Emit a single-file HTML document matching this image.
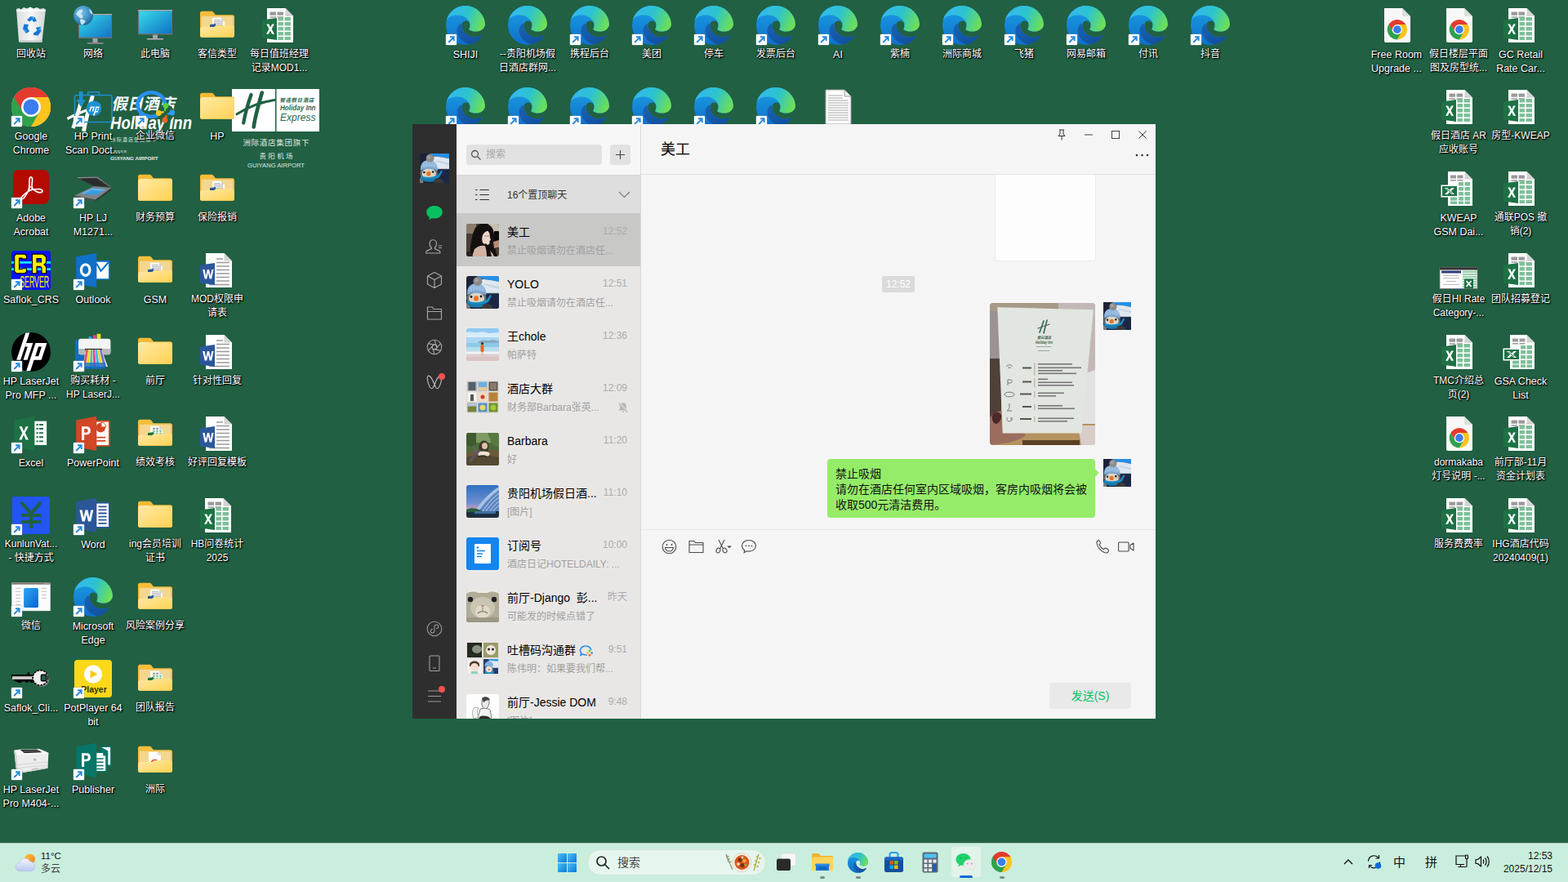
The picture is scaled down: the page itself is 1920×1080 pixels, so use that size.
<!DOCTYPE html>
<html lang="zh"><head><meta charset="utf-8"><title>Desktop</title><style>
*{box-sizing:border-box;margin:0;padding:0}
html,body{width:1920px;height:1080px;overflow:hidden}
body{background:#216043;font-family:"Liberation Sans","Noto Sans CJK SC",sans-serif;position:relative;color:#000}
.abs{position:absolute}
.di{position:absolute;width:48px;height:48px}
.di svg{position:absolute;left:0;top:0;width:48px;height:48px;overflow:visible}
.lb{position:absolute;width:110px;text-align:center;color:#fff;font-size:12px;line-height:17px;
 text-shadow:1px 1px 2px #000,0 0 2px rgba(0,0,0,.9),1px 1px 1px rgba(0,0,0,.8);white-space:nowrap}
.lb.l{font-size:12.5px;margin-top:1px}
.sc{position:absolute;left:0;top:35px;width:13px;height:13px;background:#fff;border-radius:1px;box-shadow:0 0 0 .5px rgba(160,170,180,.6)}
.sc svg{position:absolute;left:0;top:0;width:13px;height:13px}
#win{position:absolute;left:505px;top:152px;width:910px;height:728px;background:#f5f5f5;overflow:hidden}
#side{position:absolute;left:0;top:0;width:54px;height:728px;background:#2e2e2e}
#list{position:absolute;left:54px;top:0;width:226px;height:728px;background:#e9e7e6;border-right:1px solid #d9d9d9;overflow:hidden}
#chat{position:absolute;left:280px;top:0;width:630px;height:728px;background:#f5f5f5}
.it{position:absolute;left:0;width:225px;height:64px}
.it .av{position:absolute;left:12px;top:12px;width:40px;height:40px;border-radius:3px;overflow:hidden}
.it .nm{position:absolute;left:62px;top:12px;font-size:14px;line-height:20px;color:#000;white-space:nowrap}
.it .tm{position:absolute;right:16px;top:13px;font-size:12px;line-height:16px;color:#ababab;white-space:nowrap}
.it .pv{position:absolute;left:62px;top:37px;font-size:12px;line-height:16px;color:#a0a0a0;white-space:nowrap}
#tb{position:absolute;left:0;top:1032px;width:1920px;height:48px;background:#c9eedd;box-shadow:inset 0 1px 0 rgba(90,110,100,.28)}
</style></head><body>
<svg width="0" height="0" style="position:absolute">
<defs>
<linearGradient id="gFold" x1="0" y1="0" x2="1" y2="1"><stop offset="0" stop-color="#ffe9a2"/><stop offset="1" stop-color="#ffd255"/></linearGradient>
<linearGradient id="gFoldB" x1="0" y1="0" x2="0" y2="1"><stop offset="0" stop-color="#f7c64a"/><stop offset="1" stop-color="#f3d27c"/></linearGradient>
<linearGradient id="gMon" x1="0" y1="0" x2="1" y2="1"><stop offset="0" stop-color="#39dbe6"/><stop offset=".5" stop-color="#22a6d8"/><stop offset="1" stop-color="#1272c4"/></linearGradient>
<linearGradient id="gEdgeT" x1="0" y1=".3" x2="1" y2=".6"><stop offset="0" stop-color="#34b8f0"/><stop offset=".5" stop-color="#2cc3cf"/><stop offset="1" stop-color="#6fe052"/></linearGradient>
<linearGradient id="gEdgeM" x1="0" y1="0" x2="0" y2="1"><stop offset="0" stop-color="#1b9fe4"/><stop offset="1" stop-color="#0e6fca"/></linearGradient>
<linearGradient id="gEdgeD" x1="0" y1="0" x2="1" y2="1"><stop offset="0" stop-color="#1a63b4"/><stop offset="1" stop-color="#0f4c9c"/></linearGradient>
<radialGradient id="gGlobe" cx=".4" cy=".35" r=".7"><stop offset="0" stop-color="#7fc3e8"/><stop offset=".6" stop-color="#3c8fc4"/><stop offset="1" stop-color="#1f5f93"/></radialGradient>
<linearGradient id="gBin" x1="0" y1="0" x2="1" y2="0"><stop offset="0" stop-color="#d9dcdd"/><stop offset=".5" stop-color="#f6f7f7"/><stop offset="1" stop-color="#d2d6d7"/></linearGradient>
<linearGradient id="gWin" x1="0" y1="0" x2="1" y2="1"><stop offset="0" stop-color="#2ea8f5"/><stop offset="1" stop-color="#0a63c9"/></linearGradient>

<symbol id="folder" viewBox="0 0 48 48"><g transform="translate(0,0.7)">
 <path d="M3,8.5 a2.5,2.5 0 0 1 2.500,-2.500 h11.500 a3,3 0 0 1 2.200,1 l2.800,3.500 h20.500 a2.500,2.500 0 0 1 2.500,2.500 v22.500 a2.500,2.500 0 0 1 -2.500,2.500 h-37 a2.500,2.500 0 0 1 -2.500,-2.500z" fill="#f5b932"/>
 <rect x="3" y="11.500" width="42" height="26.500" rx="2.500" fill="url(#gFold)"/>
 <path d="M5,11.500 h12 v1 h-12z" fill="#fff4cf" opacity=".8"/>
</g></symbol>
<symbol id="folderopen" viewBox="0 0 48 48"><g transform="translate(0,0.7)">
 <path d="M3,8.500 a2.500,2.500 0 0 1 2.500,-2.500 h11.500 a3,3 0 0 1 2.200,1 l2.800,3.500 h20.500 a2.500,2.500 0 0 1 2.500,2.500 v22.500 a2.500,2.500 0 0 1 -2.500,2.500 h-37 a2.500,2.500 0 0 1 -2.500,-2.500z" fill="#f6bd3a"/>
 <rect x="4.800" y="12" width="38.600" height="15" rx="1" fill="#f3d791"/>
</g></symbol>
<symbol id="folderfront" viewBox="0 0 48 48"><g transform="translate(0,0.7)">
 <path d="M3,27.800 a2.500,2.500 0 0 1 2.500,-2.500 h14.500 l2.800,-1.900 h19.700 a2.500,2.500 0 0 1 2.500,2.500 v9.600 a2.500,2.500 0 0 1 -2.500,2.500 h-37 a2.500,2.500 0 0 1 -2.500,-2.500z" fill="url(#gFold)"/>
</g></symbol>
<symbol id="minidoc" viewBox="0 0 48 48"><g transform="translate(0,0.7)">
 <path d="M18,14 h11 l4,4 v10 h-15z" fill="#fff"/><path d="M29,14 l4,4 h-4z" fill="#ccc"/>
 <path d="M20,17 h8 M20,19 h11 M20,21 h11 M20,23 h11" stroke="#aaa" stroke-width="1"/>
 <path d="M15,22.500 l7,-1.200 v5.500 l-7,-1.200z" fill="#2b579a"/>
</g></symbol>
<symbol id="minixls" viewBox="0 0 48 48"><g transform="translate(0,0.7)">
 <path d="M18,14 h11 l4,4 v10 h-15z" fill="#fff"/><path d="M29,14 l4,4 h-4z" fill="#ccc"/>
 <path d="M21,16 h3 v2 h-3z M25,16 h3 v2 h-3z" fill="#999"/>
 <path d="M21,19 h3 v2 h-3z M25,19 h3 v2 h-3z M29,19 h3 v2 h-3z M21,22 h3 v2 h-3z M25,22 h3 v2 h-3z M29,22 h3 v2 h-3z" fill="#7fc29b"/>
 <path d="M15,22.500 l7,-1.200 v5.500 l-7,-1.200z" fill="#1e7145"/>
</g></symbol>
<symbol id="minipdf" viewBox="0 0 48 48"><g transform="translate(0,0.7)">
 <path d="M16,13 h11 l4,4 v12 h-15z" fill="#fff"/><path d="M27,13 l4,4 h-4z" fill="#ddd"/>
 <path d="M18.500,26 c1,-4 5,-5 8.500,-3 l-1,3z" fill="#e23a2e"/>
</g></symbol>

<symbol id="xlsfile" viewBox="0 0 48 48"><g transform="translate(0,1)">
 <path d="M9,2 h22.500 l9.500,9.500 v32.500 h-32z" fill="#fff"/>
 <path d="M31.500,2 l9.500,9.500 h-9.500z" fill="#d4d4d4"/>
 <path d="M31.500,11.500 h9.500 l-9.500,-1.500z" fill="#bbb" opacity=".5"/>
 <path d="M12.500,6.500 h7.500 v4.200 h-7.500z M21.500,6.500 h7.500 v4.200 h-7.500z" fill="#9a9a9a"/>
 <path d="M12.500,12.200 h7.500 v1.500 h-7.500z M21.500,12.200 h7.500 v1.500 h-7.500z" fill="#9a9a9a"/>
 <g fill="#7dbf99"><rect x="22.500" y="13" width="6.500" height="4.500"/><rect x="30.500" y="13" width="7.500" height="4.500"/>
 <rect x="22.500" y="19" width="6.500" height="4.500"/><rect x="30.500" y="19" width="7.500" height="4.500"/>
 <rect x="22.500" y="25" width="6.500" height="4.500"/><rect x="30.500" y="25" width="7.500" height="4.500"/>
 <rect x="22.500" y="31" width="6.500" height="4.500"/><rect x="30.500" y="31" width="7.500" height="4.500"/>
 <rect x="22.500" y="37" width="6.500" height="4"/><rect x="30.500" y="37" width="7.500" height="4"/></g>
 <path d="M3,16.500 l18,-2.500 v27 l-18,-2.500z" fill="#1e7145"/>
 <path d="M8.300,21.500 h2.900 l1.900,4 l2,-4 h2.800 l-3.300,6 l3.400,6.200 h-2.900 l-2.100,-4.200 l-2.100,4.200 h-2.800 l3.400,-6.200z" fill="#fff"/>
</g></symbol>
<symbol id="xlsold" viewBox="0 0 48 48"><g transform="translate(0,1)">
 <path d="M11,2 h20.500 l9.500,9.500 v32.500 h-30z" fill="#fff"/>
 <path d="M31.500,2 l9.500,9.500 h-9.500z" fill="#d4d4d4"/>
 <path d="M14,6.500 h7 v4 h-7z M22.500,6.500 h7 v4 h-7z" fill="#9a9a9a"/>
 <path d="M14,12 h7 v1.500 h-7z M22.500,12 h7 v1.500 h-7z" fill="#9a9a9a"/>
 <g fill="#7dbf99"><rect x="24" y="15" width="6" height="4.500"/><rect x="31.500" y="15" width="6.500" height="4.500"/>
 <rect x="24" y="21" width="6" height="4.500"/><rect x="31.500" y="21" width="6.500" height="4.500"/>
 <rect x="24" y="27" width="6" height="4.500"/><rect x="31.500" y="27" width="6.500" height="4.500"/>
 <rect x="14" y="33" width="8" height="4.500"/><rect x="24" y="33" width="6" height="4.500"/><rect x="31.500" y="33" width="6.500" height="4.500"/>
 <rect x="14" y="38.500" width="8" height="3.500"/><rect x="24" y="38.500" width="6" height="3.500"/><rect x="31.500" y="38.500" width="6.500" height="3.500"/></g>
 <rect x="2.500" y="18.500" width="21" height="15" fill="#fff"/><rect x="4" y="20" width="18" height="12" fill="#1e7145"/>
 <path d="M7,22 h3.500 l2.500,2.800 l2.500,-2.800 h3.500 l-4.200,4 l4.200,4 h-3.500 l-2.500,-2.800 l-2.500,2.800 h-3.500 l4.200,-4z" fill="#fff"/>
 <path d="M9,22.800 l7.500,6.400" stroke="#1e7145" stroke-width="1"/>
</g></symbol>
<symbol id="docfile" viewBox="0 0 48 48"><g transform="translate(0,1)">
 <path d="M10,2 h22.500 l9.500,9.500 v32.500 h-32z" fill="#fff"/>
 <path d="M32.500,2 l9.500,9.500 h-9.500z" fill="#d4d4d4"/>
 <path d="M23,9 h8 M23,13.500 h16 M23,18 h16 M23,22.500 h16 M23,27 h16 M23,31.500 h16 M23,36 h16 M14,40.500 h25" stroke="#9a9a9a" stroke-width="1.700"/>
 <path d="M3,16.500 l18,-2.500 v27 l-18,-2.500z" fill="#2b579a"/>
 <path d="M6.200,22 h2.400 l1.500,8 l1.700,-8 h2.300 l1.700,8 l1.500,-8 h2.300 l-2.500,11.500 h-2.500 l-1.700,-7.800 l-1.700,7.800 h-2.500z" fill="#fff"/>
</g></symbol>
<symbol id="txtfile" viewBox="0 0 48 48">
 <path d="M9,3 h23 l8,8 v34 h-31z" fill="#fff" stroke="#9a9a9a" stroke-width="1"/>
 <path d="M32,3 v8 h8" fill="#eee" stroke="#9a9a9a" stroke-width="1"/>
 <path d="M12,10 h18 M12,13 h18 M12,16 h25 M12,19 h25 M12,22 h25 M12,25 h25 M12,28 h25 M12,31 h25 M12,34 h25 M12,37 h25 M12,40 h25" stroke="#a8a8a8" stroke-width="1.200"/>
</symbol>
<symbol id="chrome" viewBox="0 0 48 48">
 <circle cx="24" cy="24" r="24" fill="#fff"/>
 <path d="M24,24 L3.220,12 A24,24 0 0 1 44.780,12z" fill="#e33b2e"/>
 <path d="M24,24 L44.780,12 A24,24 0 0 1 24,48z" fill="#fcc31e"/>
 <path d="M24,24 L24,48 A24,24 0 0 1 3.220,12z" fill="#2ea24c"/>
 <path d="M24,12 h20.780 A24,24 0 0 0 3.220,12 L13.600,30z" fill="#e33b2e"/>
 <path d="M34.400,30 L24,48 A24,24 0 0 0 44.780,12 H24z" fill="#fcc31e"/>
 <path d="M13.600,30 L3.220,12 A24,24 0 0 0 24,48 L34.400,30z" fill="#2ea24c"/>
 <circle cx="24" cy="24" r="12" fill="#fff"/><circle cx="24" cy="24" r="9.500" fill="#3b7ded"/>
</symbol>
<symbol id="chromefile" viewBox="0 0 48 48"><g transform="translate(0,1)">
 <path d="M9,2 h22 l10,10 v30 a2,2 0 0 1 -2,2 h-28 a2,2 0 0 1 -2,-2z" fill="#f7f7f7"/>
 <path d="M31,2 l10,10 h-8 a2,2 0 0 1 -2,-2z" fill="#dedede"/>
 <g transform="translate(12.700,16) scale(.508)">
 <circle cx="24" cy="24" r="24" fill="#fff"/>
 <path d="M24,12 h20.780 A24,24 0 0 0 3.220,12 L13.600,30z" fill="#e33b2e"/>
 <path d="M34.400,30 L24,48 A24,24 0 0 0 44.780,12 H24z" fill="#fcc31e"/>
 <path d="M13.600,30 L3.220,12 A24,24 0 0 0 24,48 L34.400,30z" fill="#2ea24c"/>
 <circle cx="24" cy="24" r="12" fill="#fff"/><circle cx="24" cy="24" r="9.500" fill="#3b7ded"/></g>
</g></symbol>
<symbol id="edge" viewBox="0 0 48 48">
 <path d="M24,0 A24,24 0 1 0 24,48 C32,48 40,44 44.600,36.100 C40,39 34,39.500 29.800,37.500 C25,35.500 20.500,31.500 19.500,25.500 C19,21.500 21.300,18.800 24,18.500 C27.500,18.200 29.800,21 29.600,24.300 C29.500,26.300 28.900,27.800 28.200,29 C31,31 34.400,31.800 38,31.500 C43,31 47.500,28 48,23 A24,24 0 0 0 24,0Z" fill="url(#gEdgeM)"/>
 <path d="M0.600,18 C3,13 9,11 15.900,11.600 C21,12 26,15 28.900,19.900 C29.900,22 29.800,26.300 28.200,29 C31,31 34.400,31.800 38,31.500 C43,31 47.500,28 48,23 A24,24 0 0 0 24,0 A24,24 0 0 0 0.600,18Z" fill="url(#gEdgeT)"/>
 <path d="M18.300,21.600 C15,24 13,28 13.600,31.900 C14.500,38 19,44 28.900,47.200 C36,46.500 41.500,42 44.600,36.100 C40,39 34,39.500 29.800,37.500 C25,35.500 20.500,31.500 19.500,25.500 C19.300,24 19,22.500 18.300,21.600Z" fill="url(#gEdgeD)"/>
</symbol>
<symbol id="arrow" viewBox="0 0 13 13">
 <path d="M3.200,10 L9.300,3.900 M5,3.300 h4.700 v4.700" fill="none" stroke="#2689dc" stroke-width="1.900"/>
</symbol>
<symbol id="recycle" viewBox="0 0 48 48"><g transform="translate(0,0.5)">
 <path d="M6,3.500 l3,-1 l3,1.500 l3,-2.500 l4,1.500 l4,-2 l4,2 l4,-1.500 l4,2 l4,-1 l3,1.500 l-4.500,39 a1.500,1.500 0 0 1 -1.500,1.300 h-25.500 a1.500,1.500 0 0 1 -1.500,-1.300z" fill="url(#gBin)"/>
 <path d="M6,4.500 h36 l-.3,2 h-35.400z" fill="#fff" opacity=".8"/>
 <path d="M10,42 h28 l-.3,2 h-27.400z" fill="#c4c8c9"/>
 <g fill="#1577d4"><path d="M19,17 l4.500,-4.500 l5,1 l2.500,4.500 l-4,1.500 l-2,-3 l-2.500,2.500z"/>
 <path d="M15.500,22 l5.500,.5 l-1.500,4 l2.500,4.500 l-4,2.500 l-4,-5.500z"/>
 <path d="M27,33 l4.500,-3 l-1.500,-3.500 l5.500,-1.500 l1,5.500 l-4,5.500 l-5.500,-.5z"/></g>
 <g fill="#4aa3ef"><path d="M23.500,12.500 l5,1 l-2,3z"/><path d="M14,28 l4,5.500 l.5,-4z"/><path d="M35.500,25 l1,5.500 l-3.500,-1.500z"/></g>
</g></symbol>
<symbol id="pc" viewBox="0 0 48 48"><g transform="translate(0,1)">
 <rect x="3" y="4" width="42" height="30.500" fill="#6b7075"/>
 <rect x="3" y="4" width="42" height="1.500" fill="#a9adb1"/>
 <rect x="4" y="5.500" width="40" height="27.500" fill="url(#gMon)"/>
 <rect x="21" y="34.500" width="6" height="4.500" fill="#9fa4a8"/>
 <rect x="14" y="39" width="20" height="2" fill="#7f8489"/><rect x="14" y="39" width="20" height=".8" fill="#b8bcc0"/>
</g></symbol>
<symbol id="net" viewBox="0 0 48 48"><g transform="translate(0,1)">
 <rect x="6" y="9" width="41" height="30" fill="#6b7075"/>
 <rect x="6" y="9" width="41" height="1.500" fill="#a9adb1"/>
 <rect x="7" y="10.500" width="39" height="27" fill="url(#gMon)"/>
 <rect x="23.500" y="39" width="6" height="5" fill="#9fa4a8"/>
 <rect x="17" y="44" width="19.500" height="2" fill="#7f8489"/>
 <circle cx="12" cy="11" r="12" fill="url(#gGlobe)"/>
 <path d="M3,9 c2,-4 5,-6 8,-5 c1,2 -1,3 -2,5 c2,1 3,3 2,5 c-2,1 -4,0 -5,-2 c-1,-1 -2,-1 -3,-3z M19,3 c2,1 4,3 4.500,6 c-1,1 -2.500,0 -3,-1.500 c-.5,-2 -1.500,-3 -1.500,-4.500z M8,16 c2,-1 5,0 7,2 c-1,2 -3,3 -4,5 c-2,-1 -3,-4 -3,-7z" fill="#d7ecf6" opacity=".9"/>
</g></symbol>
<symbol id="acrobat" viewBox="0 0 48 48">
 <rect x="2.100" y="0.900" width="43.800" height="42.100" rx="6.500" fill="#b30b00"/>
 <g fill="none" stroke="#fff" stroke-width="1.700" stroke-linecap="round" stroke-linejoin="round">
 <path d="M21.500,24 C22.500,18 21.500,13 22.500,10.800 C23.800,8.600 26,10.200 25.600,14 C25.200,18 24,21 26,25"/>
 <path d="M24,22 C28,26.500 33,29.200 36,28.700 C39,28.200 38.500,25.200 35,24.700 C31,24.200 26,24.700 21,26.200"/>
 <path d="M26,24.700 C20,27.200 15,31 12.500,34.500 C11,36.700 13.500,37.700 15.500,35.200 C18,32 21,27 22.500,21.500"/></g>
</symbol>
<symbol id="scanner" viewBox="0 0 48 48">
 <path d="M3.600,10.100 L29.100,9.500 L46.700,22.500 L24.500,21z" fill="#3b3d3f"/>
 <path d="M3.600,10.100 L29.100,9.500 L46.700,22.500 L45.500,22.300 L28.600,10.700 L6.500,11.200z" fill="#85898c"/>
 <path d="M8,12 L28,11.500 L42,21.300 L24,20z" fill="#2a2b2d"/>
 <path d="M1.300,32.400 L24.500,21.300 L46.700,23.100 L26.800,37.400z" fill="#808487"/>
 <path d="M1.300,32.400 L26.800,37.400 L26.800,39.800 L1.800,34.200z" fill="#4b4e50"/>
 <path d="M26.800,37.400 L46.700,23.100 L46.700,25.400 L26.800,39.800z" fill="#37393b"/>
 <path d="M9.200,30 L23.100,23.600 L39.300,24.900 L28.200,31.900z" fill="#3b9be0"/>
 <path d="M9.200,30 L23.100,23.600 L39.300,24.900 L36,27 L22,25.700 L12.500,30.500z" fill="#63b6ee"/>
</symbol>
<symbol id="crs" viewBox="0 0 48 48">
 <rect x="0" y="0" width="48.200" height="48" rx="4" fill="#0a14f0"/>
 <path d="M0,12.900 h48.200 v2.800 h-48.200z M0,21.200 h48.200 v2.800 h-48.200z" fill="#10e8f8"/>
 <g fill="#ffee00" stroke="#000" stroke-width="1.100" stroke-linejoin="miter">
 <path d="M6,4.100 h10.500 l2,2 v4 h-5.500 v-1 h-3.500 v13.600 h3.500 v-1 h5.500 v4 l-2,2 h-10.500 l-2.300,-2.300 v-19z"/>
 <path d="M25.500,4.100 h13 l4,3.500 v7 l-2.500,2.500 l2.600,2.600 v8 h-5.600 v-7 l-1.500,-1.500 h-4.500 v8.500 h-5.500z M31,9.500 h5.500 v4.500 h-5.500z" fill-rule="evenodd"/></g>
 <text x="10.200" y="44.700" font-family="Liberation Sans,sans-serif" font-size="19.500" fill="#ffee00" textLength="36" lengthAdjust="spacingAndGlyphs">SERVER</text>
</symbol>
<symbol id="outlook" viewBox="0 0 48 48">
 <rect x="26" y="12" width="18.800" height="23.600" rx="1.500" fill="#0f70c8"/>
 <path d="M28.200,13.800 h14.800 v20.400 h-14.800z" fill="#fff"/>
 <path d="M28.200,15.500 l5.300,9.300 l9.500,-10.800" stroke="#0f70c8" stroke-width="2" fill="none"/>
 <path d="M3.200,7.400 L28.200,2.700 L28.200,44.900 L3.200,40.200z" fill="#0f70c8"/>
 <ellipse cx="14.700" cy="23.600" rx="5.300" ry="6.700" fill="none" stroke="#fff" stroke-width="3.200"/>
</symbol>
<symbol id="hpblack" viewBox="0 0 48 48">
 <circle cx="24" cy="24" r="24" fill="#000"/>
 <path d="M17.300,0.800 L22.300,0.300 L11.200,33.800 L6.200,33.800z" fill="#fff"/>
 <path d="M18.200,13 L26.400,13 L19.500,33.800 L14.500,33.800 L19.800,17.600 L16.700,17.600z" fill="#fff"/>
 <path d="M29.500,13 L43.500,13 L36.600,33.800 L27.600,33.800 L23.200,47.200 L18.200,47.200z M33,17.600 L37,17.600 L33.200,29.200 L29.200,29.200z" fill="#fff" fill-rule="evenodd"/>
</symbol>
<symbol id="printerc" viewBox="0 0 48 48">
 <rect x="1.800" y="9.200" width="35.600" height="35.200" rx="3" fill="#1469c7"/>
 <path d="M18.500,5 h3.700 v3 h-3.700z" fill="#2f9be8"/><path d="M24,3.200 h3.700 v5 h-3.700z" fill="#e23fa0"/><path d="M28.600,1.800 h4.700 v6 h-4.700z" fill="#f0de2a"/>
 <path d="M6,11 a3.200,3.200 0 0 1 3.200,-3.200 h33 a3.200,3.200 0 0 1 3.200,3.200 v13.300 a3,3 0 0 1 -3,3 h-33.400 a3,3 0 0 1 -3,-3z" fill="#f3f4f4"/>
 <path d="M6,19.900 h39.400 v4.400 a3,3 0 0 1 -3,3 h-33.400 a3,3 0 0 1 -3,-3z" fill="#b4b8bb"/>
 <path d="M14,19.900 h21 v3 h-21z" fill="#2a2c2e"/>
 <path d="M14.800,21 h19.400 l7.800,21 h-30.500z" fill="#e9e9ef"/>
 <path d="M15.500,21 l-4,21 h3.300 l3.200,-21z" fill="#e8505a"/><path d="M18.300,21 l-2.500,21 h3.300 l1.500,-21z" fill="#f2d530"/><path d="M21,21 l-1,21 h3.300 l0,-21z" fill="#5ac27a"/>
 <path d="M23.800,21 l.5,21 h3.300 l-1.500,-21z" fill="#e6469b"/><path d="M26.500,21 l2,21 h3.300 l-3,-21z" fill="#3cb4e6"/><path d="M29,21 l3.500,21 h3.300 l-4.500,-21z" fill="#f2d530"/>
 <path d="M31.800,21 l5,21 h3.300 l-6,-21z" fill="#7a6fc8"/>
 <path d="M10,37 h29 v7.400 h-29z" fill="#1469c7" opacity=".75"/>
</symbol>
<symbol id="excel" viewBox="0 0 48 48">
 <rect x="27" y="7.800" width="17.200" height="31" fill="#1e7145"/>
 <rect x="28.200" y="8.700" width="14.900" height="29.200" fill="#fff"/>
 <path d="M30.500,12 h8.500 v1.900 h-8.500z M30.500,17.100 h8.500 v1.900 h-8.500z M30.500,22.200 h8.500 v1.900 h-8.500z M30.500,27.300 h8.500 v1.900 h-8.500z M30.500,32.400 h8.500 v1.900 h-8.500z" fill="#1e7145"/>
 <rect x="32.800" y="11" width="1.100" height="24.500" fill="#fff"/>
 <path d="M3.200,7.400 L28.200,2.700 L28.200,44.900 L3.200,40.200z" fill="#1e7145"/>
 <g transform="translate(9.300,15.200) scale(.8,.875) translate(-8.200,-15)"><path d="M8.500,15 h4 l3,6.500 l3.200,-6.500 h3.800 l-5,9 l5.200,9.500 h-4 l-3.300,-6.800 l-3.300,6.800 h-3.900 l5.100,-9.400z" fill="#fff"/></g>
</symbol>
<symbol id="ppt" viewBox="0 0 48 48">
 <rect x="27" y="7.800" width="17.800" height="32" rx="1.500" fill="#d24726"/>
 <path d="M28.200,9.600 h14.800 v28.400 h-14.800z" fill="#fff"/>
 <circle cx="33.300" cy="16.600" r="5.800" fill="#d24726"/>
 <path d="M34,15.900 v-5.800 a5.800,5.800 0 0 1 5.800,5.800z" fill="#fff" stroke="#d24726" stroke-width=".9"/>
 <path d="M28.200,27.700 h11.100 v1.800 h-11.100z M28.200,31.900 h11.100 v1.800 h-11.100z" fill="#d24726"/>
 <path d="M3.200,7.400 L28.200,2.700 L28.200,44.900 L3.200,40.200z" fill="#d24726"/>
 <g transform="translate(10.100,15.200) scale(.8,.86) translate(-10,-14)"><path d="M10,14 h7.500 c4,0 6,2.300 6,5.800 c0,3.700 -2.500,6 -6.500,6 h-3.200 v7.700 h-3.800z M13.800,17.200 v5.500 h2.800 c2,0 3,-1 3,-2.800 c0,-1.800 -1,-2.700 -3,-2.700z" fill="#fff" fill-rule="evenodd"/></g>
</symbol>
<symbol id="word" viewBox="0 0 48 48">
 <rect x="27" y="7.800" width="17.800" height="32" rx="1.500" fill="#2b579a"/>
 <path d="M28.200,9.600 h14.800 v28.400 h-14.800z" fill="#fff"/>
 <path d="M30.500,13.300 h10 M30.500,17.400 h10 M30.500,21.500 h10 M30.500,25.600 h10 M30.500,29.700 h10 M30.500,33.800 h10" stroke="#2b579a" stroke-width="1.800"/>
 <path d="M3.200,7.400 L28.200,2.700 L28.200,44.900 L3.200,40.200z" fill="#2b579a"/>
 <g transform="translate(7.500,17.500) scale(.91,.78) translate(-7,-15)"><path d="M7,15 h3.400 l2,12 l2.300,-12 h3.200 l2.300,12 l2,-12 h3.300 l-3.500,18 h-3.500 l-2.200,-11.500 l-2.300,11.500 h-3.500z" fill="#fff"/></g>
</symbol>
<symbol id="pub" viewBox="0 0 48 48">
 <rect x="32.800" y="6.400" width="13.900" height="24.600" rx="1.200" fill="#077568"/>
 <path d="M34.300,8 h10.800 v21.500 h-2.800 v-17z" fill="#fff"/>
 <rect x="27" y="13.400" width="14.600" height="25" rx="1.200" fill="#077568"/>
 <path d="M28.200,15 h8 v3.500 h3 v18.500 h-11z" fill="#fff"/>
 <path d="M28.200,22 h8.500 M28.200,26.200 h8.500 M28.200,30.400 h8.500 M28.200,34.600 h8.500" stroke="#077568" stroke-width="1.500"/>
 <path d="M3.200,7.400 L28.200,2.700 L28.200,44.900 L3.200,40.200z" fill="#077568"/>
 <g transform="translate(10.100,15.200) scale(.8,.86) translate(-10,-14)"><path d="M10,14 h7.500 c4,0 6,2.300 6,5.800 c0,3.700 -2.500,6 -6.500,6 h-3.200 v7.700 h-3.800z M13.800,17.200 v5.500 h2.800 c2,0 3,-1 3,-2.800 c0,-1.800 -1,-2.700 -3,-2.700z" fill="#fff" fill-rule="evenodd"/></g>
</symbol>
<symbol id="kunlun" viewBox="0 0 48 48"><g transform="translate(0,1)">
 <rect x="1" y="0" width="46" height="46" rx="3" fill="#2255f2"/>
 <path d="M12,7 l12,14 l12,-14 M12,23 h24 M12,31 h24 M24,21 v18" fill="none" stroke="#216043" stroke-width="4.200"/>
</g></symbol>
<symbol id="wxwin" viewBox="0 0 48 48">
 <rect x="0.300" y="6.200" width="47.400" height="34.900" rx=".8" fill="#fbfbfb"/>
 <rect x="0.300" y="6.200" width="47.400" height="2.500" fill="#7d7875"/>
 <path d="M0.600,8.700 v32.100 h46.800 v-32.100" fill="none" stroke="#cfcfcf" stroke-width=".6"/>
 <circle cx="41" cy="7.400" r=".5" fill="#ddd"/><circle cx="43" cy="7.400" r=".5" fill="#ddd"/><circle cx="45" cy="7.400" r=".5" fill="#ddd"/>
 <rect x="15.100" y="12.900" width="17.800" height="24.100" rx="1.600" fill="url(#gWin)"/>
 <path d="M5.100,13.400 h6 M5.100,17.500 h6 M5.100,21.500 h6 M5.100,25.400 h6 M5.100,29.400 h6 M5.100,33.500 h6 M37,13.400 h5.900 M37,17.500 h5.900 M37,21.500 h5.900 M37,25.400 h5.900" stroke="#b4b4b4" stroke-width=".8"/>
</symbol>
<symbol id="key" viewBox="0 0 48 48">
 <circle cx="36.600" cy="24.200" r="9.800" fill="#8c8c8c"/>
 <path d="M0.100,19.100 h19.500 v-2.800 h2.500 v2.800 h5.200 v10 h-4 v-1.500 h-3 v1.500 h-3 v-1.500 h-5 v1.500 h-4 l-1.500,-1.500 h-2 l-4.800,-4.500z" fill="#000"/>
 <rect x="1" y="21.300" width="27" height="3.600" fill="#cdcdcd"/>
 <path d="M1.500,21.700 h25" stroke="#fff" stroke-width=".7" stroke-dasharray="1 1"/>
 <circle cx="35.400" cy="23" r="9.200" fill="#ececec" stroke="#000" stroke-width="1.700" stroke-dasharray="2.600 1.300"/>
 <circle cx="35.400" cy="23" r="8.300" fill="#efefef"/>
 <rect x="36.400" y="19.300" width="6.300" height="7.400" rx="1.200" fill="#216043" stroke="#000" stroke-width="1.400"/>
</symbol>
<symbol id="pot" viewBox="0 0 48 48"><g transform="translate(0,1)">
 <rect x="1" y="0" width="46" height="46" rx="4" fill="#fbd81a"/>
 <circle cx="24" cy="17.500" r="11" fill="#fff"/><path d="M20.500,12.500 l9,5 l-9,5z" fill="#fbc91a"/>
 <text x="25" y="40" font-family="Liberation Sans,sans-serif" font-weight="bold" font-size="10.500" fill="#3a3000" text-anchor="middle">Player</text>
</g></symbol>
<symbol id="laser" viewBox="0 0 48 48">
 <path d="M3.300,11.800 L10.500,10.500 L33.800,10.100 L45.400,15 L44.500,33.800 L14.800,39 L7.900,37.400 L5.500,33z" fill="#ededed"/>
 <path d="M3.500,11.700 L33.800,10.100 L45.400,14.800 L6,15.700z" fill="#f8f8f8"/>
 <path d="M10.700,11 L31,10.500 L37.500,14.200 L15.800,15.300z" fill="#2b2b2d"/>
 <path d="M13,12.300 L32.500,11.700 L34.500,13 L14.800,13.800z" fill="#55575a"/>
 <path d="M3.300,11.800 L6,15.700 L7.900,37.400 L5.500,33z" fill="#cfd1d2"/>
 <path d="M6,15.700 L45.400,14.800 L45.300,16 L6.100,17z" fill="#fdfdfd"/>
 <path d="M7.200,29.500 L44.800,26 M7.600,33.500 L44.600,30" stroke="#c9cbcc" stroke-width=".7" fill="none"/>
 <path d="M7.900,37.400 L14.800,39 L44.500,33.800 L44.600,32 L14.800,37.200 L7.800,35.600z" fill="#d4d6d7"/>
 <circle cx="28.700" cy="23.100" r="1.700" fill="#b5b7b9"/>
 <path d="M25,35 l8,-1.300" stroke="#bfc1c2" stroke-width="1.200"/>
</symbol>
<symbol id="hpscan" viewBox="0 0 48 48"><g transform="translate(0,1)">
 <path d="M17.700,8.500 v-3.800 h13.700 v3.800" fill="none" stroke="#1d8fd1" stroke-width="1.500"/>
 <rect x="1.500" y="8.500" width="45.500" height="33" rx="2.500" fill="none" stroke="#1d8fd1" stroke-width="1.500"/>
 <path d="M7,4 h4.500 v10 h3.500 l-5.800,9 l-5.800,-9 h3.600z" fill="#1d8fd1"/>
 <circle cx="25" cy="24.700" r="9.300" fill="#1d8fd1"/>
 <path d="M22.500,17.500 l-3.500,11 h1.600 l1.500,-4.500 h2 l-1.500,4.500 h1.600 l2,-6 h-5.200 l1.600,-5z M27.500,22.500 l-3.500,11 h1.600 l1.300,-4 h2.700 l2.200,-7z M28.700,24 h1.700 l-1.200,4 h-1.700z" fill="#fff" fill-rule="evenodd"/>
</g></symbol>
<symbol id="wecom" viewBox="0 0 48 48"><g transform="translate(0,1)">
 <ellipse cx="19.300" cy="20" rx="16.800" ry="14.800" fill="none" stroke="#2a8ff0" stroke-width="4.600"/>
 <path d="M5,28 l-1.500,7.500 l7,-3z" fill="#2a8ff0"/>
 <circle cx="36.900" cy="30.300" r="10.500" fill="#216043"/>
 <g stroke-linecap="round" stroke-width="2.600" fill="none">
 <path d="M36.900,22 L36,27" stroke="#5cd032"/><path d="M44.700,30.300 L40,31.500" stroke="#2f9cf3"/><path d="M36,38.600 L37.500,34" stroke="#f3661f"/><path d="M28.500,30.300 L33.500,29.300" stroke="#f8c51c"/></g>
 <circle cx="37" cy="21.500" r="3.400" fill="#5cd032"/><circle cx="44.800" cy="30" r="3.400" fill="#2f9cf3"/><circle cx="35.900" cy="39" r="3.400" fill="#f3661f"/><circle cx="28.300" cy="30.500" r="3.400" fill="#f8c51c"/>
</g></symbol>
<symbol id="thumb" viewBox="0 0 48 48">
 <g transform="translate(0,9.500)"><rect x="1" y="11" width="46" height="26" fill="#fff" stroke="#777" stroke-width=".8"/>
 <rect x="1" y="11" width="46" height="3" fill="#333"/>
 <rect x="3" y="15" width="24" height="3" fill="#2b3a7a"/>
 <path d="M5,21 h20 M5,24 h20 M9,28 h12 M5,32 h20" stroke="#bbb" stroke-width="1"/>
 <rect x="29" y="15" width="17" height="21" fill="#9fd0b3"/>
 <path d="M29,18 h17 M29,21 h17 M29,24 h17 M29,27 h17 M29,30 h17 M29,33 h17" stroke="#fff" stroke-width=".8"/>
 <rect x="31" y="25" width="11" height="12" fill="#1e7145"/>
 <path d="M33.500,27.500 l6,7 M39.500,27.500 l-6,7" stroke="#fff" stroke-width="1.800"/></g>
</symbol>
</defs></svg>

<svg class="abs" style="left:80px;top:108px" width="160" height="92" viewBox="0 0 160 92">
<g fill="none" stroke="#fff" stroke-linecap="butt">
<path d="M19.500,15 C17,26 13,38 9.500,49" stroke-width="4.600"/><path d="M2.500,37.500 C12,32 28,26 43,20.500" stroke-width="3.200"/>
<path d="M33.500,9 C29,24 25,38 22.500,53" stroke-width="4.800"/></g>
<text transform="translate(56.20,25.80) skewX(-12)" x="0.400" y="0" font-family="Liberation Sans,Noto Sans CJK SC,sans-serif" font-weight="bold" font-size="19.200" fill="#fff" textLength="78" lengthAdjust="spacingAndGlyphs">假日酒店</text>
<text x="55" y="49.700" font-family="Liberation Sans,sans-serif" font-style="italic" font-weight="bold" font-size="22.600" fill="#fff" textLength="100" lengthAdjust="spacingAndGlyphs">Holiday Inn</text>
<text x="55.500" y="65" font-family="Liberation Sans,Noto Sans CJK SC,sans-serif" font-size="6" fill="#d5e2db" textLength="56.200" lengthAdjust="spacing">洲际酒店集团旗下</text>
<text x="59.200" y="79.300" font-family="Liberation Sans,Noto Sans CJK SC,sans-serif" font-size="3.600" fill="#d5e2db" textLength="15.600" lengthAdjust="spacing">贵阳机场</text>
<text x="55.300" y="87.700" font-family="Liberation Sans,sans-serif" font-weight="bold" font-size="5.800" fill="#e6eee9" textLength="58.300" lengthAdjust="spacingAndGlyphs">GUIYANG AIRPORT</text>
</svg><svg class="abs" style="left:284px;top:108px" width="108" height="100" viewBox="0 0 108 100">
<rect x="0" y="1" width="53" height="52" fill="#fff"/><rect x="54.500" y="1" width="52.500" height="52" fill="#fff"/>
<g fill="none" stroke="#216043" stroke-linecap="round"><path d="M23.500,8 C20,18 16,32 14.200,42.500" stroke-width="4.300"/>
<path d="M6,31.800 C18,24 34,17.200 52,14.500" stroke-width="3"/><path d="M36.800,5.500 C32,22 28,36 26.700,47.500" stroke-width="4.600"/></g>
<text transform="translate(58.20,16.80) skewX(-12)" x="0.200" y="0" font-family="Liberation Sans,Noto Sans CJK SC,sans-serif" font-weight="bold" font-size="6.500" fill="#2b6a4c" textLength="41.800" lengthAdjust="spacing">智选假日酒店</text>
<text x="59" y="26.700" font-family="Liberation Sans,sans-serif" font-style="italic" font-weight="bold" font-size="8.700" fill="#2b6a4c" textLength="43.500" lengthAdjust="spacingAndGlyphs">Holiday Inn</text>
<text x="59" y="40.200" font-family="Liberation Sans,sans-serif" font-style="italic" font-size="13" fill="#2b6a4c" textLength="43.500" lengthAdjust="spacingAndGlyphs">Express</text>
<text x="13.400" y="70" font-family="Liberation Sans,Noto Sans CJK SC,sans-serif" font-size="9.500" fill="#dce8e1" textLength="81" lengthAdjust="spacing">洲际酒店集团旗下</text>
<text x="33.500" y="86" font-family="Liberation Sans,Noto Sans CJK SC,sans-serif" font-size="8.500" fill="#dce8e1" textLength="41" lengthAdjust="spacing">贵阳机场</text>
<text x="54" y="96.500" font-family="Liberation Sans,sans-serif" font-size="7.500" fill="#dce8e1" text-anchor="middle" textLength="70" lengthAdjust="spacingAndGlyphs">GUIYANG AIRPORT</text>
</svg>
<div class="di" style="left:14px;top:7px"><svg viewBox="0 0 48 48"><use href="#recycle"/></svg></div><div class="lb" style="left:-17px;top:58px">回收站</div>
<div class="di" style="left:90px;top:7px"><svg viewBox="0 0 48 48"><use href="#net"/></svg></div><div class="lb" style="left:59px;top:58px">网络</div>
<div class="di" style="left:166px;top:7px"><svg viewBox="0 0 48 48"><use href="#pc"/></svg></div><div class="lb" style="left:135px;top:58px">此电脑</div>
<div class="di" style="left:242px;top:7px"><svg viewBox="0 0 48 48"><use href="#folderopen"/><use href="#minidoc"/><use href="#folderfront"/></svg></div><div class="lb" style="left:211px;top:58px">客信类型</div>
<div class="di" style="left:318px;top:7px"><svg viewBox="0 0 48 48"><use href="#xlsfile"/></svg></div><div class="lb" style="left:287px;top:58px">每日值班经理<br>记录MOD1...</div>
<div class="di" style="left:14px;top:107px"><svg viewBox="0 0 48 48"><use href="#chrome"/></svg><div class="sc"><svg viewBox="0 0 13 13"><use href="#arrow"/></svg></div></div><div class="lb l" style="left:-17px;top:158px">Google<br>Chrome</div>
<div class="di" style="left:90px;top:107px"><svg viewBox="0 0 48 48"><use href="#hpscan"/></svg><div class="sc"><svg viewBox="0 0 13 13"><use href="#arrow"/></svg></div></div><div class="lb l" style="left:59px;top:158px">HP Print<br>Scan Doct...</div>
<div class="di" style="left:166px;top:107px"><svg viewBox="0 0 48 48"><use href="#wecom"/></svg><div class="sc"><svg viewBox="0 0 13 13"><use href="#arrow"/></svg></div></div><div class="lb" style="left:135px;top:158px">企业微信</div>
<div class="di" style="left:242px;top:107px"><svg viewBox="0 0 48 48"><use href="#folder"/></svg></div><div class="lb l" style="left:211px;top:158px">HP</div>
<div class="di" style="left:14px;top:207px"><svg viewBox="0 0 48 48"><use href="#acrobat"/></svg><div class="sc"><svg viewBox="0 0 13 13"><use href="#arrow"/></svg></div></div><div class="lb l" style="left:-17px;top:258px">Adobe<br>Acrobat</div>
<div class="di" style="left:90px;top:207px"><svg viewBox="0 0 48 48"><use href="#scanner"/></svg><div class="sc"><svg viewBox="0 0 13 13"><use href="#arrow"/></svg></div></div><div class="lb l" style="left:59px;top:258px">HP LJ<br>M1271...</div>
<div class="di" style="left:166px;top:207px"><svg viewBox="0 0 48 48"><use href="#folder"/></svg></div><div class="lb" style="left:135px;top:258px">财务预算</div>
<div class="di" style="left:242px;top:207px"><svg viewBox="0 0 48 48"><use href="#folderopen"/><use href="#minidoc"/><use href="#folderfront"/></svg></div><div class="lb" style="left:211px;top:258px">保险报销</div>
<div class="di" style="left:14px;top:307px"><svg viewBox="0 0 48 48"><use href="#crs"/></svg><div class="sc"><svg viewBox="0 0 13 13"><use href="#arrow"/></svg></div></div><div class="lb l" style="left:-17px;top:358px">Saflok_CRS</div>
<div class="di" style="left:90px;top:307px"><svg viewBox="0 0 48 48"><use href="#outlook"/></svg><div class="sc"><svg viewBox="0 0 13 13"><use href="#arrow"/></svg></div></div><div class="lb l" style="left:59px;top:358px">Outlook</div>
<div class="di" style="left:166px;top:307px"><svg viewBox="0 0 48 48"><use href="#folderopen"/><use href="#minidoc"/><use href="#folderfront"/></svg></div><div class="lb l" style="left:135px;top:358px">GSM</div>
<div class="di" style="left:242px;top:307px"><svg viewBox="0 0 48 48"><use href="#docfile"/></svg></div><div class="lb" style="left:211px;top:358px">MOD权限申<br>请表</div>
<div class="di" style="left:14px;top:407px"><svg viewBox="0 0 48 48"><use href="#hpblack"/></svg><div class="sc"><svg viewBox="0 0 13 13"><use href="#arrow"/></svg></div></div><div class="lb l" style="left:-17px;top:458px">HP LaserJet<br>Pro MFP ...</div>
<div class="di" style="left:90px;top:407px"><svg viewBox="0 0 48 48"><use href="#printerc"/></svg><div class="sc"><svg viewBox="0 0 13 13"><use href="#arrow"/></svg></div></div><div class="lb" style="left:59px;top:458px">购买耗材 -<br>HP LaserJ...</div>
<div class="di" style="left:166px;top:407px"><svg viewBox="0 0 48 48"><use href="#folder"/></svg></div><div class="lb" style="left:135px;top:458px">前厅</div>
<div class="di" style="left:242px;top:407px"><svg viewBox="0 0 48 48"><use href="#docfile"/></svg></div><div class="lb" style="left:211px;top:458px">针对性回复</div>
<div class="di" style="left:14px;top:507px"><svg viewBox="0 0 48 48"><use href="#excel"/></svg><div class="sc"><svg viewBox="0 0 13 13"><use href="#arrow"/></svg></div></div><div class="lb l" style="left:-17px;top:558px">Excel</div>
<div class="di" style="left:90px;top:507px"><svg viewBox="0 0 48 48"><use href="#ppt"/></svg><div class="sc"><svg viewBox="0 0 13 13"><use href="#arrow"/></svg></div></div><div class="lb l" style="left:59px;top:558px">PowerPoint</div>
<div class="di" style="left:166px;top:507px"><svg viewBox="0 0 48 48"><use href="#folderopen"/><use href="#minixls"/><use href="#folderfront"/></svg></div><div class="lb" style="left:135px;top:558px">绩效考核</div>
<div class="di" style="left:242px;top:507px"><svg viewBox="0 0 48 48"><use href="#docfile"/></svg></div><div class="lb" style="left:211px;top:558px">好评回复模板</div>
<div class="di" style="left:14px;top:607px"><svg viewBox="0 0 48 48"><use href="#kunlun"/></svg><div class="sc"><svg viewBox="0 0 13 13"><use href="#arrow"/></svg></div></div><div class="lb" style="left:-17px;top:658px">KunlunVat...<br>- 快捷方式</div>
<div class="di" style="left:90px;top:607px"><svg viewBox="0 0 48 48"><use href="#word"/></svg><div class="sc"><svg viewBox="0 0 13 13"><use href="#arrow"/></svg></div></div><div class="lb l" style="left:59px;top:658px">Word</div>
<div class="di" style="left:166px;top:607px"><svg viewBox="0 0 48 48"><use href="#folder"/></svg></div><div class="lb" style="left:135px;top:658px">ing会员培训<br>证书</div>
<div class="di" style="left:242px;top:607px"><svg viewBox="0 0 48 48"><use href="#xlsfile"/></svg></div><div class="lb" style="left:211px;top:658px">HB问卷统计<br>2025</div>
<div class="di" style="left:14px;top:707px"><svg viewBox="0 0 48 48"><use href="#wxwin"/></svg><div class="sc"><svg viewBox="0 0 13 13"><use href="#arrow"/></svg></div></div><div class="lb" style="left:-17px;top:758px">微信</div>
<div class="di" style="left:90px;top:707px"><svg viewBox="0 0 48 48"><use href="#edge"/></svg><div class="sc"><svg viewBox="0 0 13 13"><use href="#arrow"/></svg></div></div><div class="lb l" style="left:59px;top:758px">Microsoft<br>Edge</div>
<div class="di" style="left:166px;top:707px"><svg viewBox="0 0 48 48"><use href="#folderopen"/><use href="#minidoc"/><use href="#folderfront"/></svg></div><div class="lb" style="left:135px;top:758px">风险案例分享</div>
<div class="di" style="left:14px;top:807px"><svg viewBox="0 0 48 48"><use href="#key"/></svg><div class="sc"><svg viewBox="0 0 13 13"><use href="#arrow"/></svg></div></div><div class="lb l" style="left:-17px;top:858px">Saflok_Cli...</div>
<div class="di" style="left:90px;top:807px"><svg viewBox="0 0 48 48"><use href="#pot"/></svg><div class="sc"><svg viewBox="0 0 13 13"><use href="#arrow"/></svg></div></div><div class="lb l" style="left:59px;top:858px">PotPlayer 64<br>bit</div>
<div class="di" style="left:166px;top:807px"><svg viewBox="0 0 48 48"><use href="#folderopen"/><use href="#minixls"/><use href="#folderfront"/></svg></div><div class="lb" style="left:135px;top:858px">团队报告</div>
<div class="di" style="left:14px;top:907px"><svg viewBox="0 0 48 48"><use href="#laser"/></svg><div class="sc"><svg viewBox="0 0 13 13"><use href="#arrow"/></svg></div></div><div class="lb l" style="left:-17px;top:958px">HP LaserJet<br>Pro M404-...</div>
<div class="di" style="left:90px;top:907px"><svg viewBox="0 0 48 48"><use href="#pub"/></svg><div class="sc"><svg viewBox="0 0 13 13"><use href="#arrow"/></svg></div></div><div class="lb l" style="left:59px;top:958px">Publisher</div>
<div class="di" style="left:166px;top:907px"><svg viewBox="0 0 48 48"><use href="#folderopen"/><use href="#minipdf"/><use href="#folderfront"/></svg></div><div class="lb" style="left:135px;top:958px">洲际</div>
<div class="di" style="left:546px;top:7px"><svg viewBox="0 0 48 48"><use href="#edge"/></svg><div class="sc"><svg viewBox="0 0 13 13"><use href="#arrow"/></svg></div></div><div class="lb l" style="left:515px;top:58px">SHIJI</div>
<div class="di" style="left:622px;top:7px"><svg viewBox="0 0 48 48"><use href="#edge"/></svg></div><div class="lb" style="left:591px;top:58px">--贵阳机场假<br>日酒店群网...</div>
<div class="di" style="left:698px;top:7px"><svg viewBox="0 0 48 48"><use href="#edge"/></svg><div class="sc"><svg viewBox="0 0 13 13"><use href="#arrow"/></svg></div></div><div class="lb" style="left:667px;top:58px">携程后台</div>
<div class="di" style="left:774px;top:7px"><svg viewBox="0 0 48 48"><use href="#edge"/></svg><div class="sc"><svg viewBox="0 0 13 13"><use href="#arrow"/></svg></div></div><div class="lb" style="left:743px;top:58px">美团</div>
<div class="di" style="left:850px;top:7px"><svg viewBox="0 0 48 48"><use href="#edge"/></svg><div class="sc"><svg viewBox="0 0 13 13"><use href="#arrow"/></svg></div></div><div class="lb" style="left:819px;top:58px">停车</div>
<div class="di" style="left:926px;top:7px"><svg viewBox="0 0 48 48"><use href="#edge"/></svg><div class="sc"><svg viewBox="0 0 13 13"><use href="#arrow"/></svg></div></div><div class="lb" style="left:895px;top:58px">发票后台</div>
<div class="di" style="left:1002px;top:7px"><svg viewBox="0 0 48 48"><use href="#edge"/></svg><div class="sc"><svg viewBox="0 0 13 13"><use href="#arrow"/></svg></div></div><div class="lb l" style="left:971px;top:58px">AI</div>
<div class="di" style="left:1078px;top:7px"><svg viewBox="0 0 48 48"><use href="#edge"/></svg><div class="sc"><svg viewBox="0 0 13 13"><use href="#arrow"/></svg></div></div><div class="lb" style="left:1047px;top:58px">紫楠</div>
<div class="di" style="left:1154px;top:7px"><svg viewBox="0 0 48 48"><use href="#edge"/></svg><div class="sc"><svg viewBox="0 0 13 13"><use href="#arrow"/></svg></div></div><div class="lb" style="left:1123px;top:58px">洲际商城</div>
<div class="di" style="left:1230px;top:7px"><svg viewBox="0 0 48 48"><use href="#edge"/></svg><div class="sc"><svg viewBox="0 0 13 13"><use href="#arrow"/></svg></div></div><div class="lb" style="left:1199px;top:58px">飞猪</div>
<div class="di" style="left:1306px;top:7px"><svg viewBox="0 0 48 48"><use href="#edge"/></svg><div class="sc"><svg viewBox="0 0 13 13"><use href="#arrow"/></svg></div></div><div class="lb" style="left:1275px;top:58px">网易邮箱</div>
<div class="di" style="left:1382px;top:7px"><svg viewBox="0 0 48 48"><use href="#edge"/></svg><div class="sc"><svg viewBox="0 0 13 13"><use href="#arrow"/></svg></div></div><div class="lb" style="left:1351px;top:58px">付讯</div>
<div class="di" style="left:1458px;top:7px"><svg viewBox="0 0 48 48"><use href="#edge"/></svg><div class="sc"><svg viewBox="0 0 13 13"><use href="#arrow"/></svg></div></div><div class="lb" style="left:1427px;top:58px">抖音</div>
<div class="di" style="left:546px;top:107px"><svg viewBox="0 0 48 48"><use href="#edge"/></svg><div class="sc"><svg viewBox="0 0 13 13"><use href="#arrow"/></svg></div></div><div class="lb l" style="left:515px;top:158px"></div>
<div class="di" style="left:622px;top:107px"><svg viewBox="0 0 48 48"><use href="#edge"/></svg><div class="sc"><svg viewBox="0 0 13 13"><use href="#arrow"/></svg></div></div><div class="lb l" style="left:591px;top:158px"></div>
<div class="di" style="left:698px;top:107px"><svg viewBox="0 0 48 48"><use href="#edge"/></svg><div class="sc"><svg viewBox="0 0 13 13"><use href="#arrow"/></svg></div></div><div class="lb l" style="left:667px;top:158px"></div>
<div class="di" style="left:774px;top:107px"><svg viewBox="0 0 48 48"><use href="#edge"/></svg><div class="sc"><svg viewBox="0 0 13 13"><use href="#arrow"/></svg></div></div><div class="lb l" style="left:743px;top:158px"></div>
<div class="di" style="left:850px;top:107px"><svg viewBox="0 0 48 48"><use href="#edge"/></svg><div class="sc"><svg viewBox="0 0 13 13"><use href="#arrow"/></svg></div></div><div class="lb l" style="left:819px;top:158px"></div>
<div class="di" style="left:926px;top:107px"><svg viewBox="0 0 48 48"><use href="#edge"/></svg><div class="sc"><svg viewBox="0 0 13 13"><use href="#arrow"/></svg></div></div><div class="lb l" style="left:895px;top:158px"></div>
<div class="di" style="left:1002px;top:107px"><svg viewBox="0 0 48 48"><use href="#txtfile"/></svg></div><div class="lb l" style="left:971px;top:158px"></div>
<div class="di" style="left:1686px;top:7px"><svg viewBox="0 0 48 48"><use href="#chromefile"/></svg></div><div class="lb l" style="left:1655px;top:58px">Free Room<br>Upgrade ...</div>
<div class="di" style="left:1762px;top:7px"><svg viewBox="0 0 48 48"><use href="#chromefile"/></svg></div><div class="lb" style="left:1731px;top:58px">假日楼层平面<br>图及房型统...</div>
<div class="di" style="left:1838px;top:7px"><svg viewBox="0 0 48 48"><use href="#xlsfile"/></svg></div><div class="lb l" style="left:1807px;top:58px">GC Retail<br>Rate Car...</div>
<div class="di" style="left:1762px;top:107px"><svg viewBox="0 0 48 48"><use href="#xlsfile"/></svg></div><div class="lb" style="left:1731px;top:158px">假日酒店 AR<br>应收账号</div>
<div class="di" style="left:1838px;top:107px"><svg viewBox="0 0 48 48"><use href="#xlsfile"/></svg></div><div class="lb" style="left:1807px;top:158px">房型-KWEAP</div>
<div class="di" style="left:1762px;top:207px"><svg viewBox="0 0 48 48"><use href="#xlsold"/></svg></div><div class="lb l" style="left:1731px;top:258px">KWEAP<br>GSM Dai...</div>
<div class="di" style="left:1838px;top:207px"><svg viewBox="0 0 48 48"><use href="#xlsfile"/></svg></div><div class="lb" style="left:1807px;top:258px">通联POS 撤<br>销(2)</div>
<div class="di" style="left:1762px;top:307px"><svg viewBox="0 0 48 48"><use href="#thumb"/></svg></div><div class="lb" style="left:1731px;top:358px">假日HI Rate<br>Category-...</div>
<div class="di" style="left:1838px;top:307px"><svg viewBox="0 0 48 48"><use href="#xlsfile"/></svg></div><div class="lb" style="left:1807px;top:358px">团队招募登记</div>
<div class="di" style="left:1762px;top:407px"><svg viewBox="0 0 48 48"><use href="#xlsfile"/></svg></div><div class="lb" style="left:1731px;top:458px">TMC介绍总<br>页(2)</div>
<div class="di" style="left:1838px;top:407px"><svg viewBox="0 0 48 48"><use href="#xlsold"/></svg></div><div class="lb l" style="left:1807px;top:458px">GSA Check<br>List</div>
<div class="di" style="left:1762px;top:507px"><svg viewBox="0 0 48 48"><use href="#chromefile"/></svg></div><div class="lb" style="left:1731px;top:558px">dormakaba<br>灯号说明 -...</div>
<div class="di" style="left:1838px;top:507px"><svg viewBox="0 0 48 48"><use href="#xlsfile"/></svg></div><div class="lb" style="left:1807px;top:558px">前厅部-11月<br>资金计划表</div>
<div class="di" style="left:1762px;top:607px"><svg viewBox="0 0 48 48"><use href="#xlsfile"/></svg></div><div class="lb" style="left:1731px;top:658px">服务费费率</div>
<div class="di" style="left:1838px;top:607px"><svg viewBox="0 0 48 48"><use href="#xlsfile"/></svg></div><div class="lb" style="left:1807px;top:658px">IHG酒店代码<br>20240409(1)</div>
<div id="win"><div id="side"><div class="abs" style="left:9px;top:36px;width:36px;height:36px;overflow:hidden"><svg viewBox="0 0 40 40" width="100%" height="100%" preserveAspectRatio="none">
<rect width="40" height="40" fill="#1e2238"/>
<path d="M12,0 h28 v7 l-10,-2 l-9,-1z" fill="#2690e8"/>
<path d="M15,4 l6,0 l9,1 l10,2 v13.500 h-18z" fill="#dfe8f0"/>
<path d="M22,9 l18,4 v3 l-18,-5z" fill="#c4d6e6"/>
<path d="M22,20 h18 v1.500 h-18z" fill="#b9c6cf"/>
<path d="M22,21.500 h18 v18.500 h-18z" fill="#1c2746"/>
<ellipse cx="12.500" cy="27" rx="12" ry="10" fill="#6d6f70"/>
<ellipse cx="12.500" cy="27.500" rx="9.500" ry="7.500" fill="#d9d5c8"/>
<path d="M1,21 c0,-8 5,-12 11,-12 c7,0 12,4 12.500,12.500 c-8,-3 -16,-3 -23.500,-.5z" fill="#8fb6dc"/>
<path d="M1,20 c8,-3 16,-3 23.500,.5 l-.2,3 c-8,-3.500 -16,-3.500 -23.500,-.5z" fill="#7ea6cf"/>
<path d="M5,13 l1,6 M9,11 l.5,7 M13,10.500 l0,7 M17,11 l-.5,7 M20.500,13 l-1,6" stroke="#a9c9e8" stroke-width="1.100" fill="none"/>
<circle cx="14" cy="6.500" r="5.500" fill="#8c8b88"/><circle cx="12.500" cy="5" r="2.500" fill="#a3a29e"/>
<circle cx="6" cy="25.500" r="1.400" fill="#151515"/><circle cx="18" cy="25" r="1.400" fill="#151515"/>
<ellipse cx="12" cy="27.500" rx="3" ry="3.200" fill="#e8742a"/>
<path d="M1,30 c7,3 16,3 24,-1 l4,-6 l2,1 l-4,8 c-8,5 -19,5 -26,2z" fill="#1b8cc4"/>
<path d="M3,33 c6,2 14,2 20,0 l1,4 c-7,2 -15,2 -21,0z" fill="#1a79ad"/>
<path d="M20,35 c4,-2 9,-1 12,2 v3 h-13z" fill="#3b3b3d"/>
<path d="M0,33 l4,3 l1,4 h-5z" fill="#7d7d7a"/>
</svg></div><svg class="abs" style="left:16px;top:99px" width="22" height="20" viewBox="0 0 22 20"><path d="M11,1 c5.500,0 9.800,3.500 9.800,7.800 c0,4.300 -4.300,7.800 -9.800,7.800 c-1.100,0 -2.200,-.15 -3.200,-.4 l-3.600,2 l.7,-3.300 c-2.300,-1.400 -3.700,-3.600 -3.700,-6.100 c0,-4.300 4.300,-7.800 9.800,-7.800z" fill="#07c160"/></svg><svg class="abs" style="left:16px;top:140px" width="22" height="20" viewBox="0 0 22 20" fill="none" stroke="#a6a6a6" stroke-width="1.200"><path d="M9,1.500 c2.700,0 4.500,2.200 4.500,5 c0,2 -.9,3.800 -2.200,4.800 v1.200 l5.500,2.600 c.7,.4 1,.9 1,1.700 v1.200 h-17 v-1.200 c0,-.8 .3,-1.300 1,-1.700 l5.500,-2.600 v-1.200 c-1.300,-1 -2.200,-2.800 -2.200,-4.800 c0,-2.800 1.800,-5 4.400,-5z"/><path d="M16,9 h4 M16,11.500 h4"/></svg><svg class="abs" style="left:16px;top:180px" width="22" height="22" viewBox="0 0 22 22" fill="none" stroke="#a6a6a6" stroke-width="1.200" stroke-linejoin="round"><path d="M11,1.500 l8.500,4.500 v10 l-8.500,4.500 l-8.500,-4.500 v-10z M2.500,6 l8.500,4.500 l8.500,-4.500 M11,10.500 v10"/></svg><svg class="abs" style="left:17px;top:223px" width="20" height="17" viewBox="0 0 20 17" fill="none" stroke="#a6a6a6" stroke-width="1.200" stroke-linejoin="round"><path d="M1.500,1 h6 l1.500,2.500 h9.500 v12.500 h-17z M1.500,6.500 h17"/></svg><svg class="abs" style="left:17px;top:263px" width="20" height="20" viewBox="0 0 20 20" fill="none" stroke="#a6a6a6" stroke-width="1.100"><circle cx="10" cy="10" r="8.800"/><circle cx="10" cy="10" r="3.100"/><path d="M10.00,1.20 L12.99,10.80 M17.62,5.60 L10.80,12.99 M17.62,14.40 L7.81,12.19 M10.00,18.80 L7.01,9.20 M2.38,14.40 L9.20,7.01 M2.38,5.60 L12.19,7.81"/></svg><svg class="abs" style="left:17px;top:307px" width="20" height="18" viewBox="0 0 20 18" fill="none" stroke="#c4c4c4" stroke-width="1.050" stroke-linejoin="round"><path d="M10,12 c-1.500,-4 -3.500,-8.500 -6,-10.500 c-1.500,-1 -2.800,0 -2.700,2 c.2,4 1.500,9 3.500,12 c1.200,1.600 2.700,1.500 3.500,0 l1.700,-3.500 l1.700,3.500 c.8,1.500 2.300,1.600 3.500,0 c2,-3 3.300,-8 3.500,-12 c.1,-2 -1.200,-3 -2.700,-2 c-2.500,2 -4.500,6.500 -6,10.500z"/></svg><div class="abs" style="left:32px;top:305px;width:8px;height:8px;border-radius:4px;background:#fa5151"></div><svg class="abs" style="left:17px;top:608px" width="20" height="20" viewBox="0 0 20 20" fill="none" stroke="#9a9a9a" stroke-width="1.050"><circle cx="10" cy="10" r="8.800"/><path d="M10,12.500 c0,1.700 -1.200,2.500 -2.400,2.500 c-1.300,0 -2.400,-1 -2.400,-2.300 c0,-1.300 1,-2.200 2.300,-2.300 M10,12.500 v-5 c0,-1.700 1.200,-2.500 2.400,-2.500 c1.300,0 2.400,1 2.400,2.300 c0,1.300 -1,2.200 -2.300,2.300" stroke-linecap="round"/></svg><svg class="abs" style="left:20px;top:650px" width="14" height="21" viewBox="0 0 14 21" fill="none" stroke="#a0a0a0" stroke-width="1.050"><rect x="1" y="1" width="12" height="18.500" rx="1"/><path d="M5,16 h4"/></svg><svg class="abs" style="left:19px;top:693px" width="16" height="15" viewBox="0 0 16 15" fill="none" stroke="#9a9a9a" stroke-width="1.200"><path d="M0,1 h16 M0,7.500 h16 M0,14 h16"/></svg><div class="abs" style="left:32px;top:688px;width:8px;height:8px;border-radius:4px;background:#fa5151"></div></div><div id="list"><div class="abs" style="left:0;top:0;width:225px;height:62px;background:#f7f7f7"></div><div class="abs" style="left:12px;top:25px;width:166px;height:25px;background:#e2e2e2;border-radius:4px"></div><svg class="abs" style="left:17px;top:31px" width="14" height="14" viewBox="0 0 14 14" fill="none" stroke="#555" stroke-width="1.300"><circle cx="5.500" cy="5.500" r="4"/><path d="M8.500,8.500 l4,4"/></svg><div class="abs" style="left:36px;top:29px;font-size:12px;line-height:16px;color:#a8a8a8">搜索</div><div class="abs" style="left:188px;top:25px;width:25px;height:25px;background:#e2e2e2;border-radius:4px"></div><svg class="abs" style="left:194px;top:31px" width="13" height="13" viewBox="0 0 13 13" stroke="#444" stroke-width="1.100"><path d="M6.500,1 v11 M1,6.500 h11"/></svg><div class="abs" style="left:0;top:62px;width:225px;height:47px;background:#dedede;border-top:1px solid #d4d4d4"></div><svg class="abs" style="left:23px;top:78px" width="18" height="16" viewBox="0 0 18 16" stroke="#2a2a2a" stroke-width="1.050" fill="none"><path d="M0,2.400 h2.500 M5.500,2.400 h11.300 M0,8.400 h2.500 M5.500,8.400 h11.300 M0,14.400 h2.500 M5.500,14.400 h11.300"/></svg><div class="abs" style="left:62px;top:78px;font-size:12px;line-height:18px;color:#333">16个置顶聊天</div><svg class="abs" style="left:198px;top:82px" width="15" height="9" viewBox="0 0 15 9" stroke="#777" stroke-width="1.100" fill="none"><path d="M1,1 l6.500,6.500 l6.500,-6.500"/></svg><div class="abs" style="left:0;top:109px;width:225px;height:65px;background:#c8c8c7"></div><div class="it" style="top:110px;"><div class="av"><svg viewBox="0 0 40 40" width="100%" height="100%"><rect width="40" height="40" fill="#4a3e36"/>
<rect x="0" y="0" width="12" height="12" fill="#8a7b6b"/><rect x="27" y="0" width="13" height="14" fill="#c9beb2"/>
<path d="M4,40 c1,-12 2,-24 6,-33 c3,-6 9,-8 14,-7 c6,1 10,6 10,14 c0,8 1,18 4,26z" fill="#14100f"/>
<path d="M19,8 c4,-2 8,0 9.500,4 l.5,5 l1,3 l-1.500,1 l0,3 c-1,2 -3,2 -5,1.500 c-3,-1 -5,-4 -6,-8 c-1,-4 0,-8 1.500,-9.500z" fill="#ecd5ca"/>
<path d="M17,7 c4,-4 10,-3 12,2 c-4,-1 -7,1 -9,5 c-1,3 -1,6 0,9 c-3,-3 -5,-10 -3,-16z" fill="#14100f"/>
<path d="M22,15 h6" stroke="#7a6a66" stroke-width=".7"/>
<path d="M10,31 c4,-4 9,-5 13,-4 l3,4 c3,2 6,4 8,9 h-27z" fill="#d2b2a2"/>
<path d="M24,24 c3,4 6,10 7,16 h-6 c0,-6 -1,-11 -3,-15z" fill="#14100f"/>
<rect x="34" y="9" width="6" height="21" rx="1" fill="#0b0a0a"/><path d="M33,22 l7,-2 v9 l-6,1z" fill="#b98b7a"/>
<path d="M0,35 l5,-2 l3,7 h-8z" fill="#2a2320"/></svg></div><div class="nm">美工</div><div class="tm">12:52</div><div class="pv">禁止吸烟请勿在酒店任...</div></div><div class="it" style="top:174px;"><div class="av"><svg viewBox="0 0 40 40" width="100%" height="100%" preserveAspectRatio="none">
<rect width="40" height="40" fill="#1e2238"/>
<path d="M12,0 h28 v7 l-10,-2 l-9,-1z" fill="#2690e8"/>
<path d="M15,4 l6,0 l9,1 l10,2 v13.500 h-18z" fill="#dfe8f0"/>
<path d="M22,9 l18,4 v3 l-18,-5z" fill="#c4d6e6"/>
<path d="M22,20 h18 v1.500 h-18z" fill="#b9c6cf"/>
<path d="M22,21.500 h18 v18.500 h-18z" fill="#1c2746"/>
<ellipse cx="12.500" cy="27" rx="12" ry="10" fill="#6d6f70"/>
<ellipse cx="12.500" cy="27.500" rx="9.500" ry="7.500" fill="#d9d5c8"/>
<path d="M1,21 c0,-8 5,-12 11,-12 c7,0 12,4 12.500,12.500 c-8,-3 -16,-3 -23.500,-.5z" fill="#8fb6dc"/>
<path d="M1,20 c8,-3 16,-3 23.500,.5 l-.2,3 c-8,-3.500 -16,-3.500 -23.500,-.5z" fill="#7ea6cf"/>
<path d="M5,13 l1,6 M9,11 l.5,7 M13,10.500 l0,7 M17,11 l-.5,7 M20.500,13 l-1,6" stroke="#a9c9e8" stroke-width="1.100" fill="none"/>
<circle cx="14" cy="6.500" r="5.500" fill="#8c8b88"/><circle cx="12.500" cy="5" r="2.500" fill="#a3a29e"/>
<circle cx="6" cy="25.500" r="1.400" fill="#151515"/><circle cx="18" cy="25" r="1.400" fill="#151515"/>
<ellipse cx="12" cy="27.500" rx="3" ry="3.200" fill="#e8742a"/>
<path d="M1,30 c7,3 16,3 24,-1 l4,-6 l2,1 l-4,8 c-8,5 -19,5 -26,2z" fill="#1b8cc4"/>
<path d="M3,33 c6,2 14,2 20,0 l1,4 c-7,2 -15,2 -21,0z" fill="#1a79ad"/>
<path d="M20,35 c4,-2 9,-1 12,2 v3 h-13z" fill="#3b3b3d"/>
<path d="M0,33 l4,3 l1,4 h-5z" fill="#7d7d7a"/>
</svg></div><div class="nm">YOLO</div><div class="tm">12:51</div><div class="pv">禁止吸烟请勿在酒店任...</div></div><div class="it" style="top:238px;"><div class="av"><svg viewBox="0 0 40 40" width="100%" height="100%"><rect width="40" height="40" fill="#a9d6f2"/>
<rect y="0" width="40" height="9" fill="#8fcaf2"/><path d="M0,5 c5,-2 9,1 14,0 c5,-2 10,0 14,1 l12,-1 v6 h-40z" fill="#e4f1fa" opacity=".85"/>
<path d="M14,17 l6,-2.500 l7,.5 l6,-1 l7,2 v2.500 h-26z" fill="#8aa9bd"/>
<rect y="18" width="40" height="9" fill="#8ccbe8"/><rect y="23" width="40" height="6" fill="#b5dff0"/>
<rect y="28" width="40" height="12" fill="#dccfd0"/><rect y="28.500" width="40" height="3" fill="#eef3f6"/><rect y="35" width="40" height="5" fill="#d9c3c0"/>
<rect x="17.500" y="20" width="4" height="9" rx="1.500" fill="#f1622a"/><circle cx="19.500" cy="18.500" r="1.600" fill="#3a2a22"/><rect x="18.200" y="29" width="1" height="5" fill="#e8b9a0"/><rect x="20" y="29" width="1" height="5" fill="#e8b9a0"/>
</svg></div><div class="nm">王chole</div><div class="tm">12:36</div><div class="pv">帕萨特</div></div><div class="it" style="top:302px;"><div class="av"><svg viewBox="0 0 40 40" width="100%" height="100%"><rect width="40" height="40" fill="#dddbd8"/>
<rect x="1.500" y="1.500" width="11" height="11" fill="#8d9496"/><rect x="14.500" y="1.500" width="11" height="11" fill="#6cb1e0"/><rect x="14.500" y="8" width="11" height="4.500" fill="#e8c79a"/><rect x="27.500" y="1.500" width="11" height="11" fill="#5d5248"/>
<rect x="1.500" y="14.500" width="11" height="11" fill="#f4f4f4"/><rect x="5" y="17" width="4" height="8" fill="#555"/><rect x="14.500" y="14.500" width="11" height="11" fill="#f0d9c0"/><circle cx="20" cy="20" r="2.500" fill="#d43b2a"/><rect x="27.500" y="14.500" width="11" height="11" fill="#b9803d"/>
<rect x="1.500" y="27.500" width="11" height="11" fill="#77813e"/><rect x="1.500" y="27.500" width="11" height="4" fill="#b8c5d8"/><rect x="14.500" y="27.500" width="11" height="11" fill="#4d8fd0"/><circle cx="20" cy="33" r="3.500" fill="#e8d66a"/><rect x="27.500" y="27.500" width="11" height="11" fill="#6e8f2d"/><circle cx="33" cy="33" r="3.500" fill="#a5c83a"/>
<rect x="3" y="2" width="8" height="10" fill="#3f4a55" opacity=".7"/><rect x="29" y="3" width="8" height="8" fill="#8b7a6a"/></svg></div><div class="nm">酒店大群</div><div class="tm">12:09</div><div class="pv">财务部Barbara张英...</div><svg class="abs" style="left:197px;top:38px" width="14" height="14" viewBox="0 0 12 12"><path d="M6,1 c2.200,0 3.300,1.600 3.300,3.600 v2.600 l1.200,1.800 h-9 l1.200,-1.800 v-2.600 c0,-2 1.100,-3.600 3.300,-3.600z M4.800,10 h2.400 c0,1.400 -2.400,1.400 -2.400,0z" fill="#b5b5b5"/><path d="M1.500,1 l9.500,10" stroke="#e9e7e6" stroke-width="2"/><path d="M1.500,1.500 l9,9.500" stroke="#b5b5b5" stroke-width="1"/></svg></div><div class="it" style="top:366px;"><div class="av"><svg viewBox="0 0 40 40" width="100%" height="100%"><rect width="40" height="40" fill="#4d6b3a"/>
<rect width="40" height="12" fill="#7f9a62"/><path d="M0,0 h12 v14 l-6,3 l-6,-2z" fill="#3f5a2e"/><path d="M26,0 h14 v18 l-8,-3z" fill="#587a3f"/>
<path d="M0,26 c8,-6 20,-8 40,-4 v18 h-40z" fill="#6c5a3c"/><path d="M0,30 c10,-4 24,-4 40,0 v10 h-40z" fill="#544a33"/>
<path d="M17,12 c3,-4 9,-3 10,2 c1,4 0,8 -2,10 l5,6 h-16 l2,-8 c-1,-4 -1,-7 1,-10z" fill="#3b3a28"/>
<ellipse cx="22.500" cy="16" rx="3.500" ry="4" fill="#e3bfa6"/><path d="M14,24 c5,-2 10,-2 15,1 l-2,4 c-4,-2 -8,-2 -12,-1z" fill="#efe2d3"/>
<path d="M2,34 l14,-14 l2,1 l-12,15z" fill="#5d5560"/><path d="M10,16 l4,8 l-2,1 l-4,-8z" fill="#6a6170"/></svg></div><div class="nm">Barbara</div><div class="tm">11:20</div><div class="pv">好</div></div><div class="it" style="top:430px;"><div class="av"><svg viewBox="0 0 40 40" width="100%" height="100%"><defs><linearGradient id="sk" x1="0" y1="0" x2="0" y2="1"><stop offset="0" stop-color="#2f6fc2"/><stop offset=".55" stop-color="#6f8fd0"/><stop offset=".8" stop-color="#e5a0b4"/><stop offset="1" stop-color="#f3c5b0"/></linearGradient></defs>
<rect width="40" height="40" fill="url(#sk)"/>
<path d="M40,2 c-10,6 -20,16 -30,30 h30z" fill="#a9c3e4"/><path d="M40,6 c-9,6 -17,15 -25,26 h25z" fill="#5f86c4"/>
<path d="M40,10 c-7,5 -14,13 -20,22 M40,15 c-6,4 -11,10 -16,17 M40,20 c-4,3 -8,7 -11,12 M40,25 c-3,2 -5,4 -7,7" stroke="#dbe7f5" stroke-width=".8" fill="none"/>
<path d="M0,32 h40 v8 h-40z" fill="#1d2f3f"/><path d="M0,30 c6,-3 12,-2 18,1 l4,2 h-22z" fill="#2d5c3f"/><rect x="10" y="32" width="26" height="3" fill="#3d6f9f"/></svg></div><div class="nm">贵阳机场假日酒...</div><div class="tm">11:10</div><div class="pv">[图片]</div></div><div class="it" style="top:494px;"><div class="av"><svg viewBox="0 0 40 40" width="100%" height="100%"><rect width="40" height="40" fill="#1485ee"/>
<rect x="10" y="8" width="20" height="24" rx="1" fill="#fff"/><circle cx="14" cy="12.500" r="1.300" fill="#1485ee"/><path d="M13,16.500 h10 M13,20 h7 M13,23.500 h6" stroke="#1485ee" stroke-width="1.600"/></svg></div><div class="nm">订阅号</div><div class="tm">10:00</div><div class="pv">酒店日记HOTELDAILY: ...</div></div><div class="it" style="top:558px;"><div class="av"><svg viewBox="0 0 40 40" width="100%" height="100%"><rect width="40" height="40" fill="#9a978a"/>
<rect width="40" height="5" fill="#ecebe4"/><path d="M0,5 c5,-3 10,-3 14,-1 h12 c4,-2 9,-2 14,1 v35 h-40z" fill="#b0ac98"/>
<ellipse cx="20" cy="22" rx="15" ry="13" fill="#c9c5b2"/><ellipse cx="20" cy="27" rx="9" ry="8" fill="#dedacb"/>
<circle cx="5" cy="12" r="3.200" fill="#1e2326"/><circle cx="34" cy="12" r="3.200" fill="#1e2326"/>
<path d="M17.500,19 h5 l-2.500,3z" fill="#b58a78"/><path d="M14,29 c3,-3 9,-3 12,0" stroke="#7a6e5c" stroke-width="1.200" fill="none"/>
<path d="M20,22 v4" stroke="#8a7d69" stroke-width="1"/><rect x="0" y="34" width="40" height="6" fill="#8f8a78" opacity=".6"/></svg></div><div class="nm">前厅-Django&nbsp; 彭...</div><div class="tm">昨天</div><div class="pv">可能发的时候点错了</div></div><div class="it" style="top:622px;"><div class="av"><svg viewBox="0 0 40 40" width="100%" height="100%"><rect width="40" height="40" fill="#e2e0dd"/>
<rect x="1" y="1" width="18" height="18" fill="#232a1f"/><ellipse cx="13" cy="9" rx="6" ry="5" fill="#8d9180"/>
<rect x="21" y="1" width="18" height="18" fill="#9a9a6c"/><ellipse cx="30" cy="10" rx="6" ry="6" fill="#ece8d8"/><circle cx="27.500" cy="9" r="1.500" fill="#222"/><circle cx="32.500" cy="9" r="1.500" fill="#222"/>
<rect x="1" y="21" width="18" height="18" fill="#f1efee"/><path d="M4,28 c0,-6 12,-6 12,0 v2 h-12z" fill="#4a372c"/><ellipse cx="10" cy="31" rx="5" ry="5" fill="#f6dccb"/><rect x="6" y="36" width="8" height="3" fill="#8fd0c5"/>
<g transform="translate(21,21) scale(.45)"><rect width="40" height="40" fill="#2b3b6b"/><path d="M12,0 h28 v8 l-14,4z" fill="#2f9be8"/><path d="M14,4 l26,2 v18 h-22z" fill="#dfeaf3"/><ellipse cx="15" cy="27" rx="11" ry="11" fill="#8f9aa5"/><ellipse cx="15" cy="28" rx="8" ry="8.500" fill="#dfe3e6"/><path d="M3,20 c0,-9 5,-14 12,-14 c7,0 12,5 12,14 c-8,-3 -16,-3 -24,0z" fill="#7fb2de"/><ellipse cx="15" cy="29" rx="2.500" ry="2.800" fill="#f07a2a"/><path d="M4,33 c7,4 16,4 23,-1 l2,5 c-8,4 -19,4 -26,1z" fill="#1d9ac8"/></g></svg></div><div class="nm">吐槽码沟通群</div><div class="tm">9:51</div><div class="pv">陈伟明：如果要我们帮...</div><svg class="abs" style="left:150px;top:15px" width="18" height="16" viewBox="0 0 18 16"><path d="M8,2 a6.500,5.500 0 1 1 -3.500,10 l-2.500,1.200 l.8,-2.400 a6.500,5.500 0 0 1 5.200,-8.800z" fill="none" stroke="#2a8ff0" stroke-width="1.600"/><circle cx="13" cy="10.500" r="4" fill="#e9e7e6"/><circle cx="13" cy="8" r="1.400" fill="#5cd032"/><circle cx="15.700" cy="10.700" r="1.400" fill="#2f9cf3"/><circle cx="13" cy="13.300" r="1.400" fill="#f3661f"/><circle cx="10.400" cy="10.700" r="1.400" fill="#f8c51c"/></svg></div><div class="it" style="top:686px;"><div class="av"><svg viewBox="0 0 40 40" width="100%" height="100%"><rect width="40" height="40" fill="#fdfdfd"/>
<path d="M20,6 c4,-3 9,0 8,5 c-1,4 -2,6 -4,7 c-3,0 -5,-3 -5,-6 c0,-3 0,-5 1,-6z" fill="#e9e9e9" stroke="#555" stroke-width=".8"/>
<path d="M19,5 c3,-3 9,-2 10,2 c-3,0 -6,1 -8,3z" fill="#444"/>
<path d="M17,18 c4,-1 9,-1 12,1 l2,10 c-6,2 -12,2 -17,0z" fill="#f1f1f1" stroke="#666" stroke-width=".8"/>
<path d="M10,16 c-3,4 -3,9 -1,14 l6,-2 c-2,-4 -2,-8 0,-11z" fill="#f6f6f6" stroke="#888" stroke-width=".7"/>
<path d="M16,28 c3,-2 9,-2 13,1 l1,6 c-5,2 -11,2 -15,0z" fill="#2c2c2c"/><path d="M15,34 c5,3 11,3 16,0 v6 h-16z" fill="#777"/></svg></div><div class="nm">前厅-Jessie DOM</div><div class="tm">9:48</div><div class="pv">[图片]</div></div></div><div id="chat"><div class="abs" style="left:24px;top:19px;font-size:18px;line-height:24px;color:#000">美工</div><svg class="abs" style="left:509px;top:6px" width="12" height="14" viewBox="0 0 12 14" fill="none" stroke="#333" stroke-width="1"><path d="M3,1 h6 M4,1 v5 l-2,2.500 h8 l-2,-2.500 v-5 M6,8.500 v5"/></svg><svg class="abs" style="left:543px;top:12px" width="10" height="2" viewBox="0 0 11 2"><path d="M0,1 h11" stroke="#333" stroke-width="1"/></svg><svg class="abs" style="left:576px;top:8px" width="10" height="10" viewBox="0 0 11 11"><rect x=".5" y=".5" width="10" height="10" fill="none" stroke="#333" stroke-width="1"/></svg><svg class="abs" style="left:609px;top:8px" width="10" height="10" viewBox="0 0 11 11"><path d="M.5,.5 l10,10 M10.500,.5 l-10,10" stroke="#333" stroke-width="1.100"/></svg><svg class="abs" style="left:605px;top:36px" width="17" height="4" viewBox="0 0 17 4" fill="#333"><circle cx="2" cy="2" r="1.300"/><circle cx="8.500" cy="2" r="1.300"/><circle cx="15" cy="2" r="1.300"/></svg><div class="abs" style="left:0;top:61px;width:630px;height:1px;background:#e3e3e3"></div><div class="abs" style="left:433px;top:62px;width:124px;height:106px;background:#fdfdfd;border:1px solid #ececec;border-top:0;border-radius:0 0 4px 4px"></div><div class="abs" style="left:295px;top:186px;width:40px;height:20px;background:#dadada;border-radius:2px;color:#fff;font-size:12px;line-height:20px;text-align:center">12:52</div><svg class="abs" style="left:427px;top:219px" width="129" height="174" viewBox="0 0 129 174"><defs><clipPath id="phclip"><rect width="129" height="174" rx="4"/></clipPath></defs><rect width="129" height="174" rx="4" fill="#b4a49c"/><filter id="phblur" x="-5%" y="-5%" width="110%" height="110%"><feGaussianBlur stdDeviation=".6"/></filter><g clip-path="url(#phclip)"><g filter="url(#phblur)">
<rect width="129" height="174" fill="#b4a49c"/>
<rect x="0" y="0" width="84" height="12" fill="#a89a88"/><rect x="84" y="0" width="45" height="90" fill="#c4b8b7"/>
<rect x="0" y="10" width="14" height="60" fill="#9a9293"/>
<rect x="0" y="68" width="14" height="80" fill="#4f3f38"/>
<path d="M112,88 l17,-6 v92 h-26z" fill="#e4e1e2"/>
<path d="M0,148 h129 v26 h-129z" fill="#b5925f"/><path d="M40,168 h70 v6 h-70z" fill="#5a4027"/><path d="M108,150 h21 v24 h-17z" fill="#d9cdc9"/>
<path d="M0,140 c8,-8 16,-10 22,-6 l22,28 c-8,6 -20,10 -44,12z" fill="#9c6d5f"/>
<path d="M3,138 c3,-5 9,-5 11,-1 c1,4 -2,10 -6,11 c-4,0 -6,-5 -5,-10z" fill="#4a2a2a"/>
<path d="M9.300,5.200 L126.900,8.300 L112.400,159.600 L15.700,159.600z" fill="#e2e6e1"/></g><g>
<g fill="none" stroke="#3f6e57" stroke-linecap="round"><path d="M66,22 l-5,14" stroke-width="1.800"/><path d="M59,31 l14,-5" stroke-width="1.300"/><path d="M70,21 l-4,16" stroke-width="1.700"/></g>
<text x="66.500" y="43.500" text-anchor="middle" font-family="Liberation Sans,Noto Sans CJK SC,sans-serif" font-style="italic" font-weight="bold" font-size="4.500" fill="#3f5f50" textLength="17" lengthAdjust="spacingAndGlyphs">假日酒店</text><text x="66.500" y="50" text-anchor="middle" font-family="Liberation Sans,sans-serif" font-style="italic" font-weight="bold" font-size="5" fill="#3f5f50" textLength="21" lengthAdjust="spacingAndGlyphs">Holiday Inn</text><rect x="57" y="53" width="18" height="1" fill="#9aa"/><rect x="59" y="58" width="14" height="1" fill="#9aa"/>
<g stroke="#777" stroke-width="1" fill="none"><path d="M20,78 c2,-3 6,-3 8,0 M22,80 c1,-1.500 3,-1.500 4,0"/><path d="M22,94 v7 M22,94 h3 c3,0 3,4 0,4 h-3"/><ellipse cx="24" cy="112" rx="6" ry="2.800"/><path d="M24,123 v6 l-3,3 h6"/><path d="M22,140 c-2,2 -1,5 2,5 c3,0 3,-3 1,-5 M27,140 v4"/></g>
<g fill="#555"><rect x="40" y="78.500" width="11" height="2"/><rect x="40" y="95.500" width="11" height="2"/><rect x="37" y="110.500" width="14" height="2"/><rect x="40" y="126" width="11" height="2"/><rect x="37" y="141" width="14" height="2"/></g>
<g fill="#b98f86"><rect x="54.500" y="73" width=".8" height="16"/><rect x="54.500" y="92" width=".8" height="11"/><rect x="54.500" y="108" width=".8" height="8"/><rect x="54.500" y="124" width=".8" height="7"/><rect x="54.500" y="139" width=".8" height="7"/></g>
<g fill="#777"><rect x="59" y="74" width="42" height="1.600"/><rect x="59" y="78.500" width="53" height="1.600"/><rect x="59" y="82" width="30" height="1.600"/><rect x="59" y="85.500" width="47" height="1.600"/>
<rect x="59" y="92.500" width="12" height="1.600"/><rect x="59" y="96.500" width="42" height="1.600"/><rect x="59" y="100" width="44" height="1.600"/>
<rect x="59" y="109.500" width="32" height="1.600"/><rect x="59" y="113" width="22" height="1.600"/>
<rect x="59" y="125" width="30" height="1.600"/><rect x="59" y="128.500" width="45" height="1.600"/>
<rect x="59" y="140.500" width="44" height="1.600"/><rect x="59" y="144" width="36" height="1.600"/></g>
</g></g></svg><div class="abs" style="left:566px;top:218px;width:34px;height:34px;overflow:hidden"><svg viewBox="0 0 40 40" width="100%" height="100%" preserveAspectRatio="none">
<rect width="40" height="40" fill="#1e2238"/>
<path d="M12,0 h28 v7 l-10,-2 l-9,-1z" fill="#2690e8"/>
<path d="M15,4 l6,0 l9,1 l10,2 v13.500 h-18z" fill="#dfe8f0"/>
<path d="M22,9 l18,4 v3 l-18,-5z" fill="#c4d6e6"/>
<path d="M22,20 h18 v1.500 h-18z" fill="#b9c6cf"/>
<path d="M22,21.500 h18 v18.500 h-18z" fill="#1c2746"/>
<ellipse cx="12.500" cy="27" rx="12" ry="10" fill="#6d6f70"/>
<ellipse cx="12.500" cy="27.500" rx="9.500" ry="7.500" fill="#d9d5c8"/>
<path d="M1,21 c0,-8 5,-12 11,-12 c7,0 12,4 12.500,12.500 c-8,-3 -16,-3 -23.500,-.5z" fill="#8fb6dc"/>
<path d="M1,20 c8,-3 16,-3 23.500,.5 l-.2,3 c-8,-3.500 -16,-3.500 -23.500,-.5z" fill="#7ea6cf"/>
<path d="M5,13 l1,6 M9,11 l.5,7 M13,10.500 l0,7 M17,11 l-.5,7 M20.500,13 l-1,6" stroke="#a9c9e8" stroke-width="1.100" fill="none"/>
<circle cx="14" cy="6.500" r="5.500" fill="#8c8b88"/><circle cx="12.500" cy="5" r="2.500" fill="#a3a29e"/>
<circle cx="6" cy="25.500" r="1.400" fill="#151515"/><circle cx="18" cy="25" r="1.400" fill="#151515"/>
<ellipse cx="12" cy="27.500" rx="3" ry="3.200" fill="#e8742a"/>
<path d="M1,30 c7,3 16,3 24,-1 l4,-6 l2,1 l-4,8 c-8,5 -19,5 -26,2z" fill="#1b8cc4"/>
<path d="M3,33 c6,2 14,2 20,0 l1,4 c-7,2 -15,2 -21,0z" fill="#1a79ad"/>
<path d="M20,35 c4,-2 9,-1 12,2 v3 h-13z" fill="#3b3b3d"/>
<path d="M0,33 l4,3 l1,4 h-5z" fill="#7d7d7a"/>
</svg></div><div class="abs" style="left:228px;top:410px;width:328px;height:72px;background:#95ec69;border-radius:4px;padding:9px 10px 0 10px;font-size:14px;line-height:19px;color:#111;white-space:nowrap">禁止吸烟<br>请勿在酒店任何室内区域吸烟，客房内吸烟将会被<br>收取500元清洁费用。</div><svg class="abs" style="left:555px;top:421px" width="6" height="12" viewBox="0 0 6 12"><path d="M0,0 l5.500,6 l-5.500,6z" fill="#95ec69"/></svg><div class="abs" style="left:566px;top:410px;width:34px;height:34px;overflow:hidden"><svg viewBox="0 0 40 40" width="100%" height="100%" preserveAspectRatio="none">
<rect width="40" height="40" fill="#1e2238"/>
<path d="M12,0 h28 v7 l-10,-2 l-9,-1z" fill="#2690e8"/>
<path d="M15,4 l6,0 l9,1 l10,2 v13.500 h-18z" fill="#dfe8f0"/>
<path d="M22,9 l18,4 v3 l-18,-5z" fill="#c4d6e6"/>
<path d="M22,20 h18 v1.500 h-18z" fill="#b9c6cf"/>
<path d="M22,21.500 h18 v18.500 h-18z" fill="#1c2746"/>
<ellipse cx="12.500" cy="27" rx="12" ry="10" fill="#6d6f70"/>
<ellipse cx="12.500" cy="27.500" rx="9.500" ry="7.500" fill="#d9d5c8"/>
<path d="M1,21 c0,-8 5,-12 11,-12 c7,0 12,4 12.500,12.500 c-8,-3 -16,-3 -23.500,-.5z" fill="#8fb6dc"/>
<path d="M1,20 c8,-3 16,-3 23.500,.5 l-.2,3 c-8,-3.500 -16,-3.500 -23.500,-.5z" fill="#7ea6cf"/>
<path d="M5,13 l1,6 M9,11 l.5,7 M13,10.500 l0,7 M17,11 l-.5,7 M20.500,13 l-1,6" stroke="#a9c9e8" stroke-width="1.100" fill="none"/>
<circle cx="14" cy="6.500" r="5.500" fill="#8c8b88"/><circle cx="12.500" cy="5" r="2.500" fill="#a3a29e"/>
<circle cx="6" cy="25.500" r="1.400" fill="#151515"/><circle cx="18" cy="25" r="1.400" fill="#151515"/>
<ellipse cx="12" cy="27.500" rx="3" ry="3.200" fill="#e8742a"/>
<path d="M1,30 c7,3 16,3 24,-1 l4,-6 l2,1 l-4,8 c-8,5 -19,5 -26,2z" fill="#1b8cc4"/>
<path d="M3,33 c6,2 14,2 20,0 l1,4 c-7,2 -15,2 -21,0z" fill="#1a79ad"/>
<path d="M20,35 c4,-2 9,-1 12,2 v3 h-13z" fill="#3b3b3d"/>
<path d="M0,33 l4,3 l1,4 h-5z" fill="#7d7d7a"/>
</svg></div><div class="abs" style="left:0;top:496px;width:630px;height:1px;background:#e7e7e7"></div><svg class="abs" style="left:25px;top:508px" width="19" height="19" viewBox="0 0 19 19" fill="none" stroke="#4a4a4a" stroke-width="1.100"><circle cx="9.500" cy="9.500" r="8.300"/><circle cx="6.500" cy="7" r="1" fill="#4a4a4a" stroke="none"/><circle cx="12.500" cy="7" r="1" fill="#4a4a4a" stroke="none"/><path d="M4.500,10.500 h10 c-.5,3 -2.500,4.500 -5,4.500 c-2.500,0 -4.500,-1.500 -5,-4.500z"/></svg><svg class="abs" style="left:58px;top:509px" width="19" height="17" viewBox="0 0 19 17" fill="none" stroke="#4a4a4a" stroke-width="1.100" stroke-linejoin="round"><path d="M1,1.500 h6 l1.500,2 h9.500 v12 h-17z M1,6 h17"/></svg><svg class="abs" style="left:89px;top:508px" width="22" height="18" viewBox="0 0 22 18" fill="none" stroke="#4a4a4a" stroke-width="1.100"><path d="M6,1 l5.500,11 M13,1 l-5.500,11"/><ellipse cx="5.500" cy="14" rx="2.300" ry="3" transform="rotate(25 5.500 14)"/><ellipse cx="13.500" cy="14" rx="2.300" ry="3" transform="rotate(-25 13.500 14)"/><path d="M17.500,9 h3 l-1.500,1.500z" fill="#4a4a4a"/></svg><svg class="abs" style="left:122px;top:508px" width="20" height="19" viewBox="0 0 20 19" fill="none" stroke="#4a4a4a" stroke-width="1.100"><path d="M10,1.500 c4.800,0 8.500,3 8.500,6.800 c0,3.800 -3.700,6.800 -8.500,6.800 c-.9,0 -1.800,-.1 -2.600,-.3 l-3.200,1.800 l.5,-2.900 c-2,-1.200 -3.200,-3.200 -3.200,-5.400 c0,-3.800 3.700,-6.800 8.500,-6.800z"/><circle cx="6.500" cy="8.300" r=".9" fill="#4a4a4a" stroke="none"/><circle cx="10" cy="8.300" r=".9" fill="#4a4a4a" stroke="none"/><circle cx="13.500" cy="8.300" r=".9" fill="#4a4a4a" stroke="none"/></svg><svg class="abs" style="left:556px;top:508px" width="19" height="19" viewBox="0 0 19 19" fill="none" stroke="#4a4a4a" stroke-width="1.100" stroke-linejoin="round"><path d="M4.500,1.500 c-1.500,.5 -2.800,1.800 -2.500,3.500 c.8,5.500 5.500,10.800 11,12 c1.700,.3 3,-1 3.500,-2.500 c.2,-.8 -.2,-1.300 -.8,-1.700 l-2.500,-1.500 c-.7,-.4 -1.400,-.2 -1.900,.4 l-.8,1 c-2.500,-1.200 -4.500,-3.500 -5.500,-6 l1,-.8 c.6,-.5 .8,-1.200 .4,-1.900 l-1.300,-2 c-.3,-.5 -.4,-.7 -.6,-.5z"/></svg><svg class="abs" style="left:584px;top:511px" width="20" height="13" viewBox="0 0 20 13" fill="none" stroke="#4a4a4a" stroke-width="1.100" stroke-linejoin="round"><rect x=".6" y="1" width="12.500" height="11" rx="1"/><path d="M15,4.500 l4,-2.500 v9 l-4,-2.500z"/></svg><div class="abs" style="left:500px;top:684px;width:100px;height:32px;background:#e9e9e9;border-radius:4px;color:#07c160;font-size:14px;line-height:32px;text-align:center">发送(S)</div></div></div>
<div id="tb"><svg class="abs" style="left:18px;top:11px" width="28" height="26" viewBox="0 0 28 26"><defs><linearGradient id="sun" x1="0" y1="0" x2="1" y2="1"><stop offset="0" stop-color="#ffc838"/><stop offset="1" stop-color="#f37a1f"/></linearGradient><linearGradient id="cld" x1="0" y1="0" x2="0" y2="1"><stop offset="0" stop-color="#f3f6ff"/><stop offset="1" stop-color="#b9c8f0"/></linearGradient></defs>
<circle cx="18.500" cy="9" r="6.500" fill="url(#sun)"/><path d="M6.500,23.500 a5,5 0 0 1 -.5,-10 a7,7 0 0 1 13,-1.500 a6,6 0 0 1 2,11.500z" fill="url(#cld)" stroke="#a9b9e6" stroke-width=".6"/></svg><div class="abs" style="left:50px;top:9px;font-size:11.500px;line-height:15px;color:#111">11°C</div><div class="abs" style="left:50px;top:25px;font-size:12px;line-height:15px;color:#444">多云</div><svg class="abs" style="left:683px;top:13px" width="23" height="23" viewBox="0 0 23 23"><defs><linearGradient id="wl" x1="0" y1="0" x2="1" y2="1"><stop offset="0" stop-color="#4cc2f8"/><stop offset="1" stop-color="#0a78d4"/></linearGradient></defs><g fill="url(#wl)"><rect x="0" y="0" width="11" height="11" rx=".6"/><rect x="12" y="0" width="11" height="11" rx=".6"/><rect x="0" y="12" width="11" height="11" rx=".6"/><rect x="12" y="12" width="11" height="11" rx=".6"/></g></svg><div class="abs" style="left:719px;top:8px;width:219px;height:32px;border-radius:16px;background:#e6f6ee;border:1px solid #cfe6da"></div><svg class="abs" style="left:729px;top:15px" width="18" height="18" viewBox="0 0 18 18" fill="none" stroke="#222" stroke-width="1.700"><circle cx="7.500" cy="7.500" r="5.500"/><path d="M11.500,11.500 l5,5" stroke-linecap="round"/></svg><div class="abs" style="left:756px;top:14px;font-size:14px;line-height:20px;color:#444">搜索</div><svg class="abs" style="left:886px;top:11px" width="48" height="26" viewBox="0 0 48 26"><circle cx="22.500" cy="13" r="11.500" fill="#f7efe6" stroke="#d9cbbb" stroke-width=".8"/><circle cx="22.500" cy="13" r="9" fill="#d4571c"/><circle cx="20" cy="10" r="2.500" fill="#7a2f1a"/><circle cx="25.500" cy="11" r="2.300" fill="#f2a23a"/><circle cx="23" cy="16.500" r="2.500" fill="#7a2f1a"/><circle cx="18" cy="15" r="1.800" fill="#f6e8c8"/><circle cx="27" cy="16" r="1.600" fill="#8fb13a"/><circle cx="23" cy="7" r="1.400" fill="#f6e8c8"/>
<path d="M3,3 l8,19" stroke="#8a9660" stroke-width="1.200"/><path d="M3,5 l4,1 M4,9 l4,0 M6,13 l4,-1 M4,4 l0,4 M6,8 l-1,4" stroke="#8a9660" stroke-width="1"/>
<path d="M43,3 l-6,20" stroke="#a7a24a" stroke-width="1.200"/><g fill="#c5b64a"><circle cx="41" cy="6" r="1.300"/><circle cx="44.500" cy="8" r="1.300"/><circle cx="39.500" cy="11" r="1.300"/><circle cx="43" cy="13" r="1.300"/><circle cx="38" cy="16" r="1.300"/><circle cx="41.500" cy="18" r="1.300"/></g></svg><svg class="abs" style="left:950px;top:12px" width="26" height="24" viewBox="0 0 26 24"><rect x="6.500" y="1" width="18" height="15" rx="2" fill="#f7f7f7" stroke="#d6d6d6" stroke-width=".6"/><rect x="1" y="7.500" width="17" height="14.500" rx="2" fill="#2a2a2a"/></svg><svg class="abs" style="left:993px;top:11px" width="28" height="26" viewBox="0 0 28 26"><path d="M1,3.500 a1.500,1.500 0 0 1 1.500,-1.500 h7 l2.500,3 h13.500 a1.500,1.500 0 0 1 1.500,1.500 v15 a1.500,1.500 0 0 1 -1.500,1.500 h-23 a1.500,1.500 0 0 1 -1.500,-1.500z" fill="#f2b230"/><rect x="1" y="6.500" width="26" height="16.500" rx="1.500" fill="#fdd45c"/><path d="M6,17 h16 v6 h-16z" fill="#1b74d4"/><path d="M9,19.500 h10 v1.500 h-10z" fill="#0e59ae"/><path d="M5,16 a1.500,1.500 0 0 1 1.500,-1.500 h15 a1.500,1.500 0 0 1 1.500,1.500 v1 h-18z" fill="#2e8ce8"/></svg><svg class="abs" style="left:1038px;top:12px" width="25" height="25" viewBox="0 0 48 48"><use href="#edge"/></svg><svg class="abs" style="left:1082px;top:10px" width="25" height="28" viewBox="0 0 25 28"><path d="M7.500,8 v-3.500 a2.500,2.500 0 0 1 2.500,-2.500 h5 a2.500,2.500 0 0 1 2.500,2.500 v3.500" fill="none" stroke="#2c9af0" stroke-width="2"/><rect x="1" y="7.500" width="23" height="18.500" rx="2.500" fill="#134f9e"/><rect x="1" y="7.500" width="23" height="4" rx="2" fill="#1a66c4"/><rect x="7.500" y="12" width="4.500" height="4.500" fill="#f25022"/><rect x="13" y="12" width="4.500" height="4.500" fill="#7fba00"/><rect x="7.500" y="17.500" width="4.500" height="4.500" fill="#00a4ef"/><rect x="13" y="17.500" width="4.500" height="4.500" fill="#ffb900"/></svg><svg class="abs" style="left:1129px;top:11px" width="20" height="26" viewBox="0 0 20 26"><rect x=".5" y=".5" width="19" height="25" rx="2" fill="#5b6875"/><rect x="2.500" y="2.500" width="15" height="5" fill="#4cc2f8"/><g fill="#e8ecef"><rect x="2.500" y="9.500" width="4" height="4"/><rect x="8" y="9.500" width="4" height="4"/><rect x="2.500" y="15" width="4" height="4"/><rect x="8" y="15" width="4" height="4"/><rect x="2.500" y="20.500" width="4" height="3.500"/><rect x="8" y="20.500" width="4" height="3.500"/></g><rect x="13.500" y="9.500" width="4" height="4" fill="#e8ecef"/><rect x="13.500" y="15" width="4" height="9" fill="#1b5fb0"/></svg><div class="abs" style="left:1164px;top:4px;width:38px;height:39px;border-radius:4px;background:#e2f4ea;border:1px solid #d2eadf"></div><svg class="abs" style="left:1170px;top:12px" width="26" height="23" viewBox="0 0 26 23"><path d="M9.500,1 c5,0 9,3.300 9,7.400 c0,4.100 -4,7.400 -9,7.400 c-1,0 -2,-.15 -2.900,-.4 l-3.300,1.800 l.7,-3 c-2.100,-1.400 -3.500,-3.500 -3.500,-5.800 c0,-4.100 4,-7.400 9,-7.400z" fill="#1fd36b"/><path d="M17.500,8.500 c4.200,0 7.500,2.800 7.500,6.200 c0,1.900 -1.100,3.600 -2.800,4.800 l.5,2.400 l-2.700,-1.400 c-.8,.2 -1.600,.3 -2.500,.3 c-4.200,0 -7.500,-2.700 -7.500,-6.100 c0,-3.400 3.300,-6.200 7.500,-6.200z" fill="#ececec" stroke="#d8d8d8" stroke-width=".5"/><circle cx="6.500" cy="6.500" r="1" fill="#14a552"/><circle cx="12.500" cy="6.500" r="1" fill="#14a552"/><circle cx="15" cy="13.500" r=".9" fill="#999"/><circle cx="20" cy="13.500" r=".9" fill="#999"/></svg><div class="abs" style="left:1175px;top:40px;width:16px;height:3px;border-radius:1.500px;background:#0a6cd6"></div><svg class="abs" style="left:1214px;top:11px" width="25" height="25" viewBox="0 0 48 48"><use href="#chrome"/></svg><div class="abs" style="left:1004px;top:41px;width:6px;height:3px;border-radius:1.500px;background:#7d8a84"></div><div class="abs" style="left:1048px;top:41px;width:6px;height:3px;border-radius:1.500px;background:#7d8a84"></div><div class="abs" style="left:1224px;top:41px;width:6px;height:3px;border-radius:1.500px;background:#7d8a84"></div><svg class="abs" style="left:1645px;top:19px" width="12" height="8" viewBox="0 0 12 8" fill="none" stroke="#111" stroke-width="1.300"><path d="M1,7 l5,-5 l5,5"/></svg><svg class="abs" style="left:1674px;top:14px" width="18" height="19" viewBox="0 0 18 19" fill="none" stroke="#111" stroke-width="1.200"><path d="M1.500,8.500 a7,7 0 0 1 12.500,-4 M14.500,1 v4 h-4 M15.500,9.500 a7,7 0 0 1 -12.500,4.500 M2.500,17 v-3.500 h3.500"/><circle cx="13.500" cy="14" r="3.800" fill="#0a6cd6" stroke="none"/></svg><div class="abs" style="left:1706px;top:14px;font-size:15px;line-height:20px;color:#111">中</div><div class="abs" style="left:1745px;top:14px;font-size:15px;line-height:20px;color:#111">拼</div><svg class="abs" style="left:1782px;top:14px" width="18" height="18" viewBox="0 0 18 18" fill="none" stroke="#111" stroke-width="1.200"><path d="M12,2 h-11 v10.500 h10 M6.500,12.500 v3 M3.500,15.500 h10 M14,6 v9.500"/><rect x="12.500" y="1" width="3" height="4.500" rx="1"/></svg><svg class="abs" style="left:1806px;top:15px" width="18" height="16" viewBox="0 0 18 16" fill="none" stroke="#111" stroke-width="1.200" stroke-linejoin="round"><path d="M1,5.500 h2.500 l4,-3.500 v12 l-4,-3.500 h-2.500z M10,5.500 c1,1 1,4 0,5 M12.500,3.500 c2,2 2,7 0,9 M15,1.500 c3,3.500 3,9.500 0,13"/></svg><div class="abs" style="left:1800px;top:8px;width:101px;text-align:right;font-size:12px;line-height:16px;color:#111">12:53<br>2025/12/15</div></div></body></html>
